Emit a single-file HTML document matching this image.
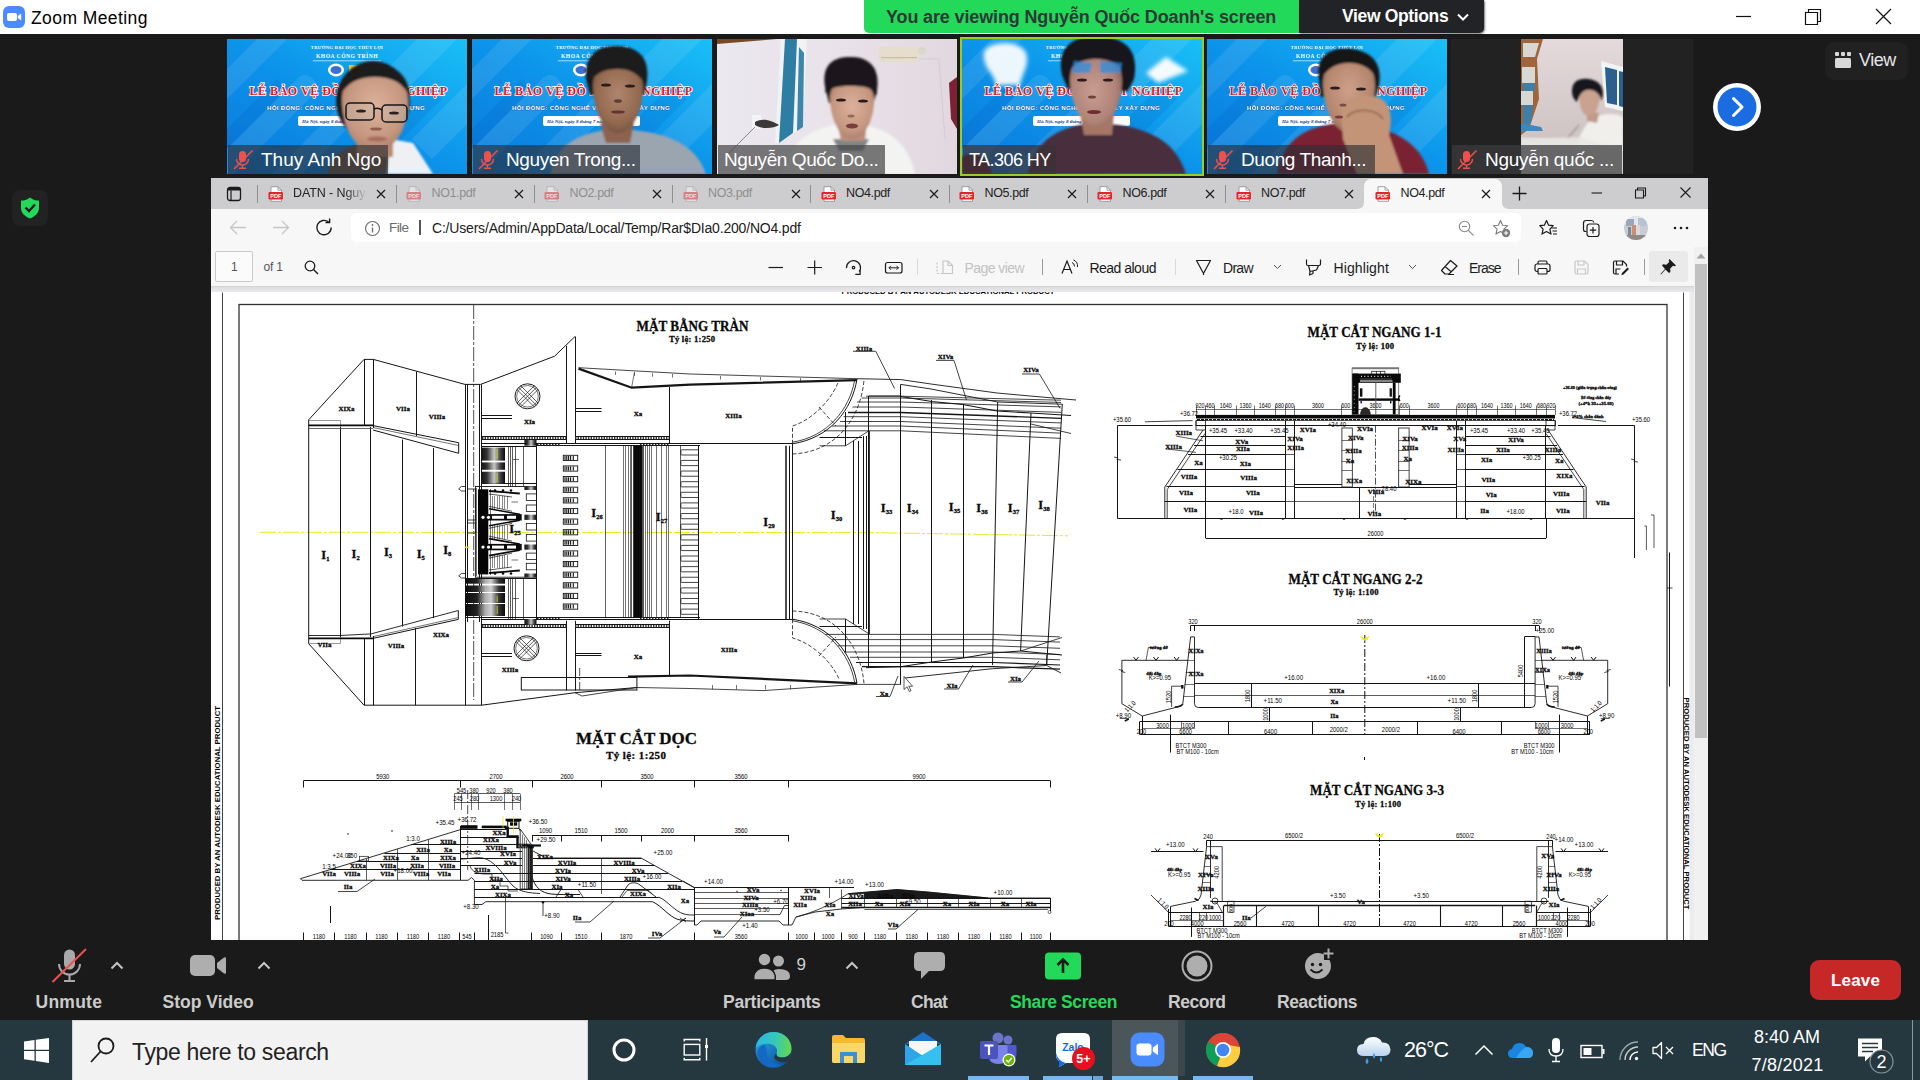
<!DOCTYPE html>
<html lang="vi">
<head>
<meta charset="utf-8">
<title>Zoom Meeting</title>
<style>
html,body{margin:0;padding:0;}
body{width:1920px;height:1080px;overflow:hidden;background:#1a1a1a;font-family:"Liberation Sans","DejaVu Sans",sans-serif;position:relative;}
.abs{position:absolute;}
.t{position:absolute;white-space:nowrap;line-height:1;}
#titlebar{left:0;top:0;width:1920px;height:34px;background:#fff;}
#banner{left:864px;top:0;width:435px;height:33px;background:#23d959;border-radius:0 0 0 5px;}
#viewopt{left:1299px;top:0;width:185px;height:33px;background:#222326;border-radius:0 0 5px 0;box-shadow:1px 1px 2px rgba(0,0,0,.5);}
.tile{position:absolute;top:39px;height:135px;overflow:hidden;}
.lbl{position:absolute;left:0;bottom:0;height:29px;background:rgba(40,44,52,.62);}
.lbl span{position:absolute;top:4px;color:#fff;font-size:19px;white-space:nowrap;line-height:22px;}
.zbtn{position:absolute;color:#cbcbcb;font-size:17.5px;font-weight:bold;white-space:nowrap;line-height:1;}
#taskbar{left:0;top:1020px;width:1920px;height:60px;background:#25383f;}
</style>
</head>
<body>
<!-- ===== Zoom title bar ===== -->
<div id="titlebar" class="abs"></div>
<svg class="abs" style="left:3px;top:6px" width="22" height="22" viewBox="0 0 22 22"><rect x="0" y="0" width="22" height="22" rx="6" fill="#4a8cff"/><rect x="4" y="7" width="10" height="8" rx="2" fill="#fff"/><path d="M14.8 10 L18.2 7.6 V14.4 L14.8 12 Z" fill="#fff"/></svg>
<div class="t" style="left:31px;top:9.500px;font-size:17.5px;color:#000;letter-spacing:.42px">Zoom Meeting</div>
<svg class="abs" style="left:1730px;top:4px" width="170" height="26" viewBox="0 0 170 26"><g stroke="#111" stroke-width="1.2" fill="none"><path d="M6 12.5 H21"/><path d="M75.500 8.500 H87.500 V20.500 H75.500 Z"/><path d="M78.500 8.500 V5.500 H90.500 V17.500 H87.500"/><path d="M146 5 L161 20 M161 5 L146 20"/></g></svg>
<div id="banner" class="abs"></div>
<div class="t" style="left:886px;top:8px;font-size:18px;font-weight:bold;color:#2c3a35;letter-spacing:-0.14px">You are viewing Nguyễn Quốc Doanh's screen</div>
<div id="viewopt" class="abs"></div>
<div class="t" style="left:1342px;top:8px;font-size:17.5px;font-weight:bold;color:#fff;letter-spacing:-0.35px">View Options</div>
<svg class="abs" style="left:1456px;top:12px" width="14" height="10" viewBox="0 0 14 10"><path d="M2 2.500 L7 7.500 L12 2.500" stroke="#fff" stroke-width="2" fill="none"/></svg>

<!-- ===== shield ===== -->
<div class="abs" style="left:12px;top:190px;width:36px;height:36px;border-radius:8px;background:#222"></div>
<svg class="abs" style="left:19px;top:196px" width="22" height="24" viewBox="0 0 22 24"><path d="M11 1.500 C8 4 5 4.500 2 4.500 V12 C2 17 6 20.500 11 22.500 C16 20.500 20 17 20 12 V4.500 C17 4.500 14 4 11 1.500 Z" fill="#23d959"/><path d="M6.500 11.500 L10 15 L16 8.500" stroke="#1d1d1d" stroke-width="2.400" fill="none"/></svg>

<!-- ===== View button / next arrow ===== -->
<div class="abs" style="left:1825px;top:42px;width:83px;height:38px;border-radius:9px;background:#212121"></div>
<svg class="abs" style="left:1834px;top:51px" width="18" height="18" viewBox="0 0 18 18"><g fill="#d8d8d8"><rect x="1" y="1" width="4" height="4" rx="1"/><rect x="7" y="1" width="4" height="4" rx="1"/><rect x="13" y="1" width="4" height="4" rx="1"/><rect x="1" y="7" width="16" height="10" rx="1.500"/></g></svg>
<div class="t" style="left:1859px;top:51px;font-size:18px;color:#e6e6e6;letter-spacing:-.5px">View</div>
<svg class="abs" style="left:1712px;top:82px" width="50" height="50" viewBox="0 0 50 50"><circle cx="25" cy="25" r="24" fill="#fff"/><circle cx="25" cy="25" r="19.500" fill="#1b6ce0"/><path d="M21.500 16.500 L30 25 L21.500 33.500" stroke="#fff" stroke-width="3" fill="none" stroke-linecap="round" stroke-linejoin="round"/></svg>
<!-- ===== video tiles ===== -->
<svg width="0" height="0" style="position:absolute">
<defs>
<linearGradient id="bgBlue" x1="0" y1="1" x2="1" y2="0"><stop offset="0" stop-color="#0a7ada"/><stop offset=".5" stop-color="#0c93ea"/><stop offset="1" stop-color="#19c0f6"/></linearGradient>
<filter id="b1" x="-20%" y="-20%" width="140%" height="140%"><feGaussianBlur stdDeviation="1"/></filter>
<filter id="b2" x="-20%" y="-20%" width="140%" height="140%"><feGaussianBlur stdDeviation="2.200"/></filter>
<filter id="b05" x="-20%" y="-20%" width="140%" height="140%"><feGaussianBlur stdDeviation="0.500"/></filter>
<g id="blueBack">
<rect width="240" height="135" fill="url(#bgBlue)"/>
<g opacity=".09" fill="#fff"><path d="M-10 120 L70 40 Q78 32 86 40 Q94 48 86 56 L-10 152Z"/><path d="M30 150 L120 60 L150 60 L60 150Z"/><path d="M150 40 L200 -10 L240 -10 L170 60Z"/><path d="M185 100 L250 35 V75 L205 120Z"/><path d="M0 30 L40 -10 H70 L0 60Z"/></g>
<g opacity=".14" fill="#0050b8"><path d="M110 135 L200 45 L215 60 L140 135Z"/><path d="M0 90 L50 40 L60 50 L0 110Z"/></g>
<rect x="86" y="21.500" width="68" height=".7" fill="#fff" opacity=".9"/>
<ellipse cx="109" cy="31" rx="8" ry="6.500" fill="#fff"/><ellipse cx="109" cy="31" rx="5.500" ry="4" fill="#3b6fd0"/>
<rect x="122" y="26" width="12" height="9" fill="#e9c94a"/>
<rect x="71" y="77" width="97" height="10" rx="2" fill="#fff"/>
</g>
<radialGradient id="skinA" cx=".5" cy=".42" r=".62"><stop offset="0" stop-color="#dcb19b"/><stop offset=".7" stop-color="#c59780"/><stop offset="1" stop-color="#a87c66"/></radialGradient>
<radialGradient id="skinB" cx=".5" cy=".42" r=".62"><stop offset="0" stop-color="#b0856e"/><stop offset=".7" stop-color="#93694f"/><stop offset="1" stop-color="#70503e"/></radialGradient>
<radialGradient id="skinC" cx=".45" cy=".5" r=".62"><stop offset="0" stop-color="#c99d92"/><stop offset=".7" stop-color="#b08378"/><stop offset="1" stop-color="#8a6058"/></radialGradient>
<radialGradient id="skinD" cx=".5" cy=".42" r=".62"><stop offset="0" stop-color="#cfa089"/><stop offset=".7" stop-color="#b5876f"/><stop offset="1" stop-color="#916853"/></radialGradient>
<g id="micOff"><rect x="6" y="1" width="7" height="11" rx="3.500" fill="#f0504d"/><path d="M3.500 9 A6 6 0 0 0 15.500 9" stroke="#f0504d" stroke-width="1.400" fill="none"/><path d="M9.500 15 V18 M6 18.300 H13" stroke="#f0504d" stroke-width="1.400"/><path d="M1 19 L19.500 0.500" stroke="#f0504d" stroke-width="1.500"/></g>
</defs>
</svg>

<!-- tile 1 -->
<div class="tile" style="left:227px;width:240px">
<svg width="240" height="135" viewBox="0 0 240 135" style="position:absolute;left:0;top:0">
<use href="#blueBack"/>
<g font-family="'Liberation Serif',serif" font-weight="bold" text-anchor="middle">
<text x="120" y="9.500" font-size="4.600" fill="#fff" letter-spacing=".3">TRƯỜNG ĐẠI HỌC THỦY LỢI</text>
<text x="120" y="18.500" font-size="5.600" fill="#fff" letter-spacing=".5">KHOA CÔNG TRÌNH</text>
<text x="121.500" y="56" font-size="13" textLength="198" lengthAdjust="spacingAndGlyphs" fill="#e6151c" stroke="#fff" stroke-width="1.600" paint-order="stroke" letter-spacing=".6">LỄ BẢO VỆ ĐỒ ÁN TỐT NGHIỆP</text>
</g>
<text x="119" y="70.500" font-family="'Liberation Sans',sans-serif" font-weight="bold" font-size="6.200" fill="#fff" text-anchor="middle" textLength="158" lengthAdjust="spacingAndGlyphs" letter-spacing=".3" stroke="#0a3c8a" stroke-width=".5" paint-order="stroke">HỘI ĐỒNG: CÔNG NGHỆ VÀ QUẢN LÝ XÂY DỰNG</text>
<text x="75" y="84.300" font-family="'Liberation Serif',serif" font-style="italic" font-weight="bold" font-size="5" fill="#123a8c">Hà Nội, ngày 8 tháng 7 năm 2021</text>
<g filter="url(#b1)">
<path d="M100 135 C105 112 125 104 148 104 C172 104 196 112 204 135Z" fill="#6e5a48"/>
<path d="M163 100 L186 104 L206 135 L160 135Z" fill="#eef0f4"/>
<rect x="130" y="92" width="36" height="26" fill="#b98a70"/>
<ellipse cx="146" cy="62" rx="37" ry="40" fill="#1d1a1c"/>
<path d="M115 60 C115 40 128 34 148 34 C168 34 181 42 181 62 C181 90 168 112 148 112 C128 112 115 90 115 60Z" fill="url(#skinA)"/>
<path d="M112 58 C114 36 130 26 150 26 C170 26 182 38 183 58 C176 44 166 38 148 38 C130 38 120 44 112 58Z" fill="#1d1a1c"/>
<ellipse cx="150" cy="100" rx="10" ry="2.500" fill="#a86a60"/>
</g>
<g stroke="#15161a" stroke-width="1.500" fill="rgba(190,205,195,.22)"><rect x="119" y="64" width="28" height="17" rx="4"/><rect x="155" y="66" width="25" height="17" rx="4"/><path d="M147 70 Q151 68 155 71" fill="none"/></g>
<g filter="url(#b05)" fill="#2a2020"><ellipse cx="134" cy="72" rx="5" ry="1.600"/><ellipse cx="167" cy="74" rx="5" ry="1.600"/><ellipse cx="149" cy="90" rx="6" ry="1.600" fill="#8d5e50"/></g>
</svg>
<div class="lbl" style="width:160px;left:1px"><svg style="position:absolute;left:5px;top:5px" width="20" height="20" viewBox="0 0 20 20"><use href="#micOff"/></svg><span style="left:33px">Thuy Anh Ngo</span></div>
</div>
<!-- tile 2 -->
<div class="tile" style="left:472px;width:240px">
<svg width="240" height="135" viewBox="0 0 240 135" style="position:absolute;left:0;top:0">
<use href="#blueBack"/>
<g font-family="'Liberation Serif',serif" font-weight="bold" text-anchor="middle">
<text x="120" y="9.500" font-size="4.600" fill="#fff" letter-spacing=".3">TRƯỜNG ĐẠI HỌC THỦY LỢI</text>
<text x="120" y="18.500" font-size="5.600" fill="#fff" letter-spacing=".5">KHOA CÔNG TRÌNH</text>
<text x="121.500" y="56" font-size="13" textLength="198" lengthAdjust="spacingAndGlyphs" fill="#e6151c" stroke="#fff" stroke-width="1.600" paint-order="stroke" letter-spacing=".6">LỄ BẢO VỆ ĐỒ ÁN TỐT NGHIỆP</text>
</g>
<text x="119" y="70.500" font-family="'Liberation Sans',sans-serif" font-weight="bold" font-size="6.200" fill="#fff" text-anchor="middle" textLength="158" lengthAdjust="spacingAndGlyphs" letter-spacing=".3" stroke="#0a3c8a" stroke-width=".5" paint-order="stroke">HỘI ĐỒNG: CÔNG NGHỆ VÀ QUẢN LÝ XÂY DỰNG</text>
<text x="75" y="84.300" font-family="'Liberation Serif',serif" font-style="italic" font-weight="bold" font-size="5" fill="#123a8c">Hà Nội, ngày 8 tháng 7 năm 2021</text>
<g filter="url(#b1)">
<path d="M78 135 C84 104 110 92 146 90 C186 92 222 100 234 135Z" fill="#9aa5b0"/>
<path d="M128 84 L162 84 L158 104 L134 104Z" fill="#8b6450"/>
<path d="M114 40 C112 14 128 6 146 7 C166 8 178 18 175 42 L172 56 L118 56Z" fill="#1b1a1e"/>
<path d="M121 46 C121 30 132 26 146 26 C160 26 171 32 171 48 C171 72 160 94 146 94 C132 94 121 72 121 46Z" fill="url(#skinB)"/>
<path d="M117 44 C118 24 132 18 148 19 C164 20 174 28 174 46 C166 34 158 30 146 30 C132 30 124 34 117 44Z" fill="#1b1a1e"/>
</g>
<g filter="url(#b05)" fill="#2b1b18"><ellipse cx="134" cy="46" rx="5" ry="1.500"/><ellipse cx="158" cy="47" rx="5" ry="1.500"/><ellipse cx="146" cy="62" rx="4" ry="1.800" fill="#5e3d30"/><ellipse cx="146" cy="73" rx="7" ry="1.600" fill="#5e3532"/></g>
</svg>
<div class="lbl" style="width:167px;left:1px"><svg style="position:absolute;left:5px;top:5px" width="20" height="20" viewBox="0 0 20 20"><use href="#micOff"/></svg><span style="left:33px;letter-spacing:-.37px">Nguyen Trong...</span></div>
</div>

<!-- tile 3 -->
<div class="tile" style="left:717px;width:240px">
<svg width="240" height="135" viewBox="0 0 240 135" style="position:absolute;left:0;top:0">
<defs><linearGradient id="wall3" x1="0" y1="0" x2="1" y2="0"><stop offset="0" stop-color="#ebe8ef"/><stop offset=".5" stop-color="#e9e2ea"/><stop offset="1" stop-color="#e2d7df"/></linearGradient></defs>
<rect width="240" height="135" fill="url(#wall3)"/>
<g filter="url(#b05)">
<path d="M0 0 H60 L0 5Z" fill="#7a4a22"/>
<path d="M64 0 L90 0 L86 88 L62 104 L58 104Z" fill="#f1f2f4"/>
<path d="M68 0 L80 0 L76 94 L62 104Z" fill="#2f7ea4"/>
<path d="M82 8 L87 14 L86 88 L80 92Z" fill="#3a86aa"/>
<rect x="162" y="8" width="40" height="15" rx="2" fill="#e6ddcc"/><rect x="164" y="18" width="36" height="1.200" fill="#c9bda8"/><circle cx="205" cy="12" r="4" fill="#d9d9c8"/>
<path d="M202 20 H222 L228 100" stroke="#d2c6ce" stroke-width=".8" fill="none"/>
<rect x="35" y="76" width="9" height="14" fill="#f4f3f6"/>
<path d="M38 83 C46 78 56 82 62 86 C56 90 44 90 38 86Z" fill="#3b3838"/>
<path d="M38 88 L8 118" stroke="#77727a" stroke-width=".8"/>
<path d="M232 44 L240 38 V90 L234 80Z" fill="#7b2230"/>
</g>
<g filter="url(#b1)">
<path d="M64 135 C70 104 96 86 132 84 C170 86 192 104 198 135Z" fill="#f3f3f1"/>
<path d="M116 100 L152 100 L146 112 L122 112Z" fill="#7f8588"/>
<path d="M120 82 L150 82 L148 102 L124 102Z" fill="#b98e7c"/>
<path d="M108 48 C104 24 118 17 136 18 C154 19 163 30 160 52 L156 66 L112 64Z" fill="#1c191c"/>
<path d="M113 58 C113 46 122 44 134 44 C148 44 157 48 157 60 C157 82 147 100 135 100 C123 100 113 80 113 58Z" fill="url(#skinA)"/>
<path d="M108 54 C110 34 122 30 136 31 C150 32 160 40 160 56 C152 46 146 48 134 47 C122 47 114 48 108 54Z" fill="#1c191c"/>
</g>
<g filter="url(#b05)" fill="#2a1c1c"><ellipse cx="124" cy="61" rx="5" ry="1.600"/><ellipse cx="146" cy="62" rx="5" ry="1.600"/><ellipse cx="134" cy="77" rx="3.500" ry="1.500" fill="#946a5a"/><ellipse cx="135" cy="87" rx="6" ry="2.500" fill="#7a3d3c"/></g>
</svg>
<div class="lbl" style="width:167px;left:1px;background:rgba(70,70,72,.72)"><span style="left:6px;letter-spacing:-.42px">Nguyễn Quốc Do...</span></div>
</div>

<!-- tile 4 (active speaker) -->
<div class="abs" style="left:960px;top:37px;width:244px;height:139px;background:#9acd1e"></div>
<div class="tile" style="left:962px;width:240px">
<svg width="240" height="135" viewBox="0 0 240 135" style="position:absolute;left:0;top:0">
<use href="#blueBack"/>
<g filter="url(#b2)" fill="#fff"><path d="M22 14 C24 2 58 0 64 14 C68 26 60 34 58 46 H34 C32 34 20 28 22 14Z" opacity=".92"/><path d="M204 18 L226 32 L196 44 L184 34Z" opacity=".95"/></g>
<g font-family="'Liberation Serif',serif" font-weight="bold" text-anchor="middle">
<text x="120" y="9.500" font-size="4.600" fill="#fff" letter-spacing=".3">TRƯỜNG ĐẠI HỌC THỦY LỢI</text>
<text x="120" y="18.500" font-size="5.600" fill="#fff" letter-spacing=".5">KHOA CÔNG TRÌNH</text>
<text x="121.500" y="56" font-size="13" textLength="198" lengthAdjust="spacingAndGlyphs" fill="#d81a24" stroke="#fff" stroke-width="1.600" paint-order="stroke" letter-spacing=".6">LỄ BẢO VỆ ĐỒ ÁN TỐT NGHIỆP</text>
</g>
<text x="119" y="70.500" font-family="'Liberation Sans',sans-serif" font-weight="bold" font-size="6.200" fill="#fff" text-anchor="middle" textLength="158" lengthAdjust="spacingAndGlyphs" letter-spacing=".3" stroke="#0a3c8a" stroke-width=".5" paint-order="stroke">HỘI ĐỒNG: CÔNG NGHỆ VÀ QUẢN LÝ XÂY DỰNG</text>
<text x="75" y="84.300" font-family="'Liberation Serif',serif" font-style="italic" font-weight="bold" font-size="5" fill="#123a8c">Hà Nội, ngày 8 tháng 7 năm 2021</text>
<g filter="url(#b1)">
<path d="M0 118 C10 112 24 114 30 135 H0Z" fill="#5a1e22"/>
<path d="M66 135 C72 100 100 86 134 84 C176 86 212 96 224 135Z" fill="#4a2e3c"/>
<path d="M118 74 L152 74 L150 96 L122 96Z" fill="#a67666"/>
<path d="M100 36 C94 8 112 -4 136 -2 C160 -2 178 8 172 40 L166 52 L106 50Z" fill="#17161b"/>
<path d="M108 40 C108 22 120 16 134 16 C150 16 160 22 160 42 C160 66 148 88 134 88 C120 88 108 64 108 40Z" fill="url(#skinC)"/>
<path d="M102 40 C102 14 118 6 136 6 C156 6 168 14 168 42 C160 26 150 20 134 20 C120 20 110 24 102 40Z" fill="#17161b"/>
<path d="M112 22 L130 24 L128 34 L110 34Z M138 22 L160 24 L158 34 L138 34Z" fill="#2f8fe0" opacity=".75"/>
</g>
<g filter="url(#b05)" fill="#2a1c1c"><ellipse cx="120" cy="41" rx="5" ry="1.500"/><ellipse cx="146" cy="41" rx="5" ry="1.500"/><ellipse cx="130" cy="58" rx="4" ry="1.600" fill="#6e4238"/><ellipse cx="132" cy="73" rx="7" ry="2" fill="#6e2f32"/></g>
</svg>
<div class="lbl" style="width:93px;left:1px;background:rgba(58,50,56,.72)"><span style="left:6px;letter-spacing:-.55px;font-size:18px">TA.306 HY</span></div>
</div>

<!-- tile 5 -->
<div class="tile" style="left:1207px;width:240px">
<svg width="240" height="135" viewBox="0 0 240 135" style="position:absolute;left:0;top:0">
<use href="#blueBack"/>
<g font-family="'Liberation Serif',serif" font-weight="bold" text-anchor="middle" filter="url(#b05)">
<text x="120" y="9.500" font-size="4.600" fill="#fff" letter-spacing=".3">TRƯỜNG ĐẠI HỌC THỦY LỢI</text>
<text x="120" y="18.500" font-size="5.600" fill="#fff" letter-spacing=".5">KHOA CÔNG TRÌNH</text>
<text x="121.500" y="56" font-size="13" textLength="198" lengthAdjust="spacingAndGlyphs" fill="#d4242c" stroke="#e8eef8" stroke-width="1.600" paint-order="stroke" letter-spacing=".6">LỄ BẢO VỆ ĐỒ ÁN TỐT NGHIỆP</text>
</g>
<text x="119" y="70.500" font-family="'Liberation Sans',sans-serif" font-weight="bold" font-size="6.200" fill="#fff" text-anchor="middle" textLength="158" lengthAdjust="spacingAndGlyphs" letter-spacing=".3" stroke="#0a3c8a" stroke-width=".5" paint-order="stroke" filter="url(#b05)">HỘI ĐỒNG: CÔNG NGHỆ VÀ QUẢN LÝ XÂY DỰNG</text>
<text x="75" y="84.300" font-family="'Liberation Serif',serif" font-style="italic" font-weight="bold" font-size="5" fill="#123a8c">Hà Nội, ngày 8 tháng 7 năm 2021</text>
<g filter="url(#b1)">
<path d="M70 135 C76 100 100 86 136 84 C176 84 214 100 222 135Z" fill="#7a2030"/>
<path d="M112 40 C108 14 126 8 144 10 C164 12 176 24 172 46 L168 60 L114 58Z" fill="#191619"/>
<path d="M116 44 C116 26 128 20 142 20 C158 20 168 28 168 46 C168 72 156 94 142 94 C128 94 116 70 116 44Z" fill="url(#skinD)"/>
<path d="M112 42 C114 20 128 14 144 15 C160 16 172 24 172 44 C166 30 156 24 142 24 C128 24 120 30 112 42Z" fill="#191619"/>
<path d="M134 74 C130 62 150 54 170 58 C184 62 186 80 182 96 L196 135 H150 L136 100Z" fill="#c39478"/>
<path d="M140 78 C148 68 170 70 176 80" stroke="#8c5e4a" stroke-width="1.500" fill="none"/>
</g>
<g filter="url(#b05)" fill="#2a1c1c"><ellipse cx="128" cy="49" rx="5" ry="1.600"/><ellipse cx="154" cy="50" rx="5" ry="1.600"/><ellipse cx="136" cy="66" rx="3.500" ry="1.600" fill="#7a4e40"/><ellipse cx="132" cy="78" rx="4" ry="1.500" fill="#7a3a3a"/></g>
</svg>
<div class="lbl" style="width:167px;left:1px"><svg style="position:absolute;left:5px;top:5px" width="20" height="20" viewBox="0 0 20 20"><use href="#micOff"/></svg><span style="left:33px;letter-spacing:-.4px">Duong Thanh...</span></div>
</div>

<!-- tile 6 -->
<div class="tile" style="left:1451px;width:242px;background:#222">
<svg width="102" height="135" viewBox="0 0 102 135" style="position:absolute;left:70px;top:0">
<defs><linearGradient id="wall6" x1="0" y1="0" x2="0" y2="1"><stop offset="0" stop-color="#e4dadb"/><stop offset="1" stop-color="#c8bcbc"/></linearGradient></defs>
<rect width="102" height="135" fill="url(#wall6)"/>
<g filter="url(#b05)">
<path d="M0 0 H22 L16 20 L18 60 L8 90 L0 96Z" fill="#a0653a"/>
<path d="M2 4 H18 L14 18 H2Z M1 28 H14 V44 H1Z M0 52 H12 V66 H0Z" fill="#d8d8d2"/>
<path d="M2 44 H14 V52 H2Z M2 66 H12 L10 84 H2Z" fill="#3d7fa8"/>
<path d="M0 84 L20 88 L22 92 L0 92Z" fill="#3f86b6"/>
<path d="M80 22 L102 28 V72 L84 68Z" fill="#f1f3f4"/>
<path d="M84 28 L96 31 V66 L86 64Z" fill="#2a5f8e"/><path d="M98 32 L102 33 V68 L98 67Z" fill="#2a5f8e"/>
<path d="M0 98 L40 100 L70 104 L102 108 V135 H0Z" fill="#d9d6d4"/>
<path d="M0 112 H102 V135 H0Z" fill="#a9a4a2"/>
</g>
<g filter="url(#b1)">
<path d="M50 135 C52 108 62 84 74 78 C84 74 96 74 102 78 V135Z" fill="#f0efec"/>
<path d="M66 72 L78 74 L76 84 L66 82Z" fill="#c29a86"/>
<path d="M58 56 C58 48 64 46 71 47 C78 48 80 56 78 64 C76 74 70 78 65 76 C60 74 58 64 58 56Z" fill="#c9a290"/>
<path d="M51 52 C51 40 62 38 72 41 C82 44 84 54 80 62 C79 54 73 50 66 51 C60 52 58 58 56 63 C53 60 51 58 51 52Z" fill="#17161a"/>
<path d="M46 100 L58 86" stroke="#555" stroke-width=".8"/>
<path d="M0 100 L60 98 L102 112 V135 H0Z" fill="#e9e7e4" opacity=".85"/>
</g>
</svg>
<div class="lbl" style="width:170px;left:1px;background:rgba(60,60,62,.74)"><svg style="position:absolute;left:5px;top:5px" width="20" height="20" viewBox="0 0 20 20"><use href="#micOff"/></svg><span style="left:33px;letter-spacing:-.28px">Nguyễn quốc ...</span></div>
</div>
<!-- ===== Edge browser window ===== -->
<div class="abs" style="left:211px;top:178px;width:1497px;height:762px;background:#fff;overflow:hidden"></div>
<div class="abs" style="left:211px;top:178px;width:1497px;height:31px;background:#cdcdcf"></div>
<div class="abs" style="left:211px;top:209px;width:1497px;height:78px;background:#f7f7f7"></div>
<div class="abs" style="left:211px;top:286px;width:1483px;height:1px;background:#d4d4d4"></div>
<div class="abs" style="left:211px;top:287px;width:1483px;height:5px;background:linear-gradient(#dedee0,#e9e9eb)"></div>
<svg class="abs" style="left:226px;top:186px" width="16" height="16" viewBox="0 0 16 16"><rect x="1.5" y="1.5" width="13" height="13" rx="2.5" fill="none" stroke="#1b1b1b" stroke-width="1.3"/><path d="M1.5 4.5 H14.5 V3.5 Q14.5 1.5 12 1.5 H4 Q1.5 1.5 1.5 3.500Z" fill="#1b1b1b"/><path d="M5 4.500 V14.500" stroke="#1b1b1b" stroke-width="1.200"/></svg>
<div class="abs" style="left:257.0px;top:185px;width:1px;height:18px;background:#8f8f8f"></div>
<svg class="abs" style="left:267.5px;top:186px;opacity:1" width="16" height="16" viewBox="0 0 16 16"><path d="M3 .7 H10 L13.500 4.200 V15.300 H3Z" fill="#fff" stroke="#8a8a8a" stroke-width=".8"/><path d="M10 .7 V4.200 H13.500" fill="none" stroke="#8a8a8a" stroke-width=".8"/><rect x=".5" y="6" width="14.500" height="7.500" rx="1.200" fill="#e5252a"/><text x="7.800" y="12" font-family="Liberation Sans,sans-serif" font-weight="bold" font-size="5.600" fill="#fff" text-anchor="middle">PDF</text></svg>
<div class="t" style="left:293.0px;top:187px;font-size:12.5px;color:#222;width:74px;overflow:hidden;-webkit-mask-image:linear-gradient(90deg,#000 70%,transparent 100%);mask-image:linear-gradient(90deg,#000 70%,transparent 100%);letter-spacing:-.1px">DATN - Nguye</div>
<svg class="abs" style="left:375.5px;top:189px" width="10" height="10" viewBox="0 0 10 10"><path d="M1 1 L9 9 M9 1 L1 9" stroke="#1b1b1b" stroke-width="1.200" fill="none"/></svg>
<div class="abs" style="left:395.5px;top:185px;width:1px;height:18px;background:#8f8f8f"></div>
<svg class="abs" style="left:406px;top:186px;opacity:0.45" width="16" height="16" viewBox="0 0 16 16"><path d="M3 .7 H10 L13.500 4.200 V15.300 H3Z" fill="#fff" stroke="#8a8a8a" stroke-width=".8"/><path d="M10 .7 V4.200 H13.500" fill="none" stroke="#8a8a8a" stroke-width=".8"/><rect x=".5" y="6" width="14.500" height="7.500" rx="1.200" fill="#e5252a"/><text x="7.800" y="12" font-family="Liberation Sans,sans-serif" font-weight="bold" font-size="5.600" fill="#fff" text-anchor="middle">PDF</text></svg>
<div class="t" style="left:431.5px;top:187px;font-size:12.5px;color:#8d8d8d;letter-spacing:-.37px">NO1.pdf</div>
<svg class="abs" style="left:514px;top:189px" width="10" height="10" viewBox="0 0 10 10"><path d="M1 1 L9 9 M9 1 L1 9" stroke="#1b1b1b" stroke-width="1.200" fill="none"/></svg>
<div class="abs" style="left:533.5px;top:185px;width:1px;height:18px;background:#8f8f8f"></div>
<svg class="abs" style="left:544px;top:186px;opacity:0.45" width="16" height="16" viewBox="0 0 16 16"><path d="M3 .7 H10 L13.500 4.200 V15.300 H3Z" fill="#fff" stroke="#8a8a8a" stroke-width=".8"/><path d="M10 .7 V4.200 H13.500" fill="none" stroke="#8a8a8a" stroke-width=".8"/><rect x=".5" y="6" width="14.500" height="7.500" rx="1.200" fill="#e5252a"/><text x="7.800" y="12" font-family="Liberation Sans,sans-serif" font-weight="bold" font-size="5.600" fill="#fff" text-anchor="middle">PDF</text></svg>
<div class="t" style="left:569.5px;top:187px;font-size:12.5px;color:#8d8d8d;letter-spacing:-.37px">NO2.pdf</div>
<svg class="abs" style="left:652px;top:189px" width="10" height="10" viewBox="0 0 10 10"><path d="M1 1 L9 9 M9 1 L1 9" stroke="#1b1b1b" stroke-width="1.200" fill="none"/></svg>
<div class="abs" style="left:672.0px;top:185px;width:1px;height:18px;background:#8f8f8f"></div>
<svg class="abs" style="left:682.5px;top:186px;opacity:0.45" width="16" height="16" viewBox="0 0 16 16"><path d="M3 .7 H10 L13.500 4.200 V15.300 H3Z" fill="#fff" stroke="#8a8a8a" stroke-width=".8"/><path d="M10 .7 V4.200 H13.500" fill="none" stroke="#8a8a8a" stroke-width=".8"/><rect x=".5" y="6" width="14.500" height="7.500" rx="1.200" fill="#e5252a"/><text x="7.800" y="12" font-family="Liberation Sans,sans-serif" font-weight="bold" font-size="5.600" fill="#fff" text-anchor="middle">PDF</text></svg>
<div class="t" style="left:708.0px;top:187px;font-size:12.5px;color:#8d8d8d;letter-spacing:-.37px">NO3.pdf</div>
<svg class="abs" style="left:790.5px;top:189px" width="10" height="10" viewBox="0 0 10 10"><path d="M1 1 L9 9 M9 1 L1 9" stroke="#1b1b1b" stroke-width="1.200" fill="none"/></svg>
<div class="abs" style="left:810.0px;top:185px;width:1px;height:18px;background:#8f8f8f"></div>
<svg class="abs" style="left:820.5px;top:186px;opacity:1" width="16" height="16" viewBox="0 0 16 16"><path d="M3 .7 H10 L13.500 4.200 V15.300 H3Z" fill="#fff" stroke="#8a8a8a" stroke-width=".8"/><path d="M10 .7 V4.200 H13.500" fill="none" stroke="#8a8a8a" stroke-width=".8"/><rect x=".5" y="6" width="14.500" height="7.500" rx="1.200" fill="#e5252a"/><text x="7.800" y="12" font-family="Liberation Sans,sans-serif" font-weight="bold" font-size="5.600" fill="#fff" text-anchor="middle">PDF</text></svg>
<div class="t" style="left:846.0px;top:187px;font-size:12.5px;color:#222;letter-spacing:-.37px">NO4.pdf</div>
<svg class="abs" style="left:928.5px;top:189px" width="10" height="10" viewBox="0 0 10 10"><path d="M1 1 L9 9 M9 1 L1 9" stroke="#1b1b1b" stroke-width="1.200" fill="none"/></svg>
<div class="abs" style="left:948.5px;top:185px;width:1px;height:18px;background:#8f8f8f"></div>
<svg class="abs" style="left:959px;top:186px;opacity:1" width="16" height="16" viewBox="0 0 16 16"><path d="M3 .7 H10 L13.500 4.200 V15.300 H3Z" fill="#fff" stroke="#8a8a8a" stroke-width=".8"/><path d="M10 .7 V4.200 H13.500" fill="none" stroke="#8a8a8a" stroke-width=".8"/><rect x=".5" y="6" width="14.500" height="7.500" rx="1.200" fill="#e5252a"/><text x="7.800" y="12" font-family="Liberation Sans,sans-serif" font-weight="bold" font-size="5.600" fill="#fff" text-anchor="middle">PDF</text></svg>
<div class="t" style="left:984.5px;top:187px;font-size:12.5px;color:#222;letter-spacing:-.37px">NO5.pdf</div>
<svg class="abs" style="left:1067px;top:189px" width="10" height="10" viewBox="0 0 10 10"><path d="M1 1 L9 9 M9 1 L1 9" stroke="#1b1b1b" stroke-width="1.200" fill="none"/></svg>
<div class="abs" style="left:1086.5px;top:185px;width:1px;height:18px;background:#8f8f8f"></div>
<svg class="abs" style="left:1097px;top:186px;opacity:1" width="16" height="16" viewBox="0 0 16 16"><path d="M3 .7 H10 L13.500 4.200 V15.300 H3Z" fill="#fff" stroke="#8a8a8a" stroke-width=".8"/><path d="M10 .7 V4.200 H13.500" fill="none" stroke="#8a8a8a" stroke-width=".8"/><rect x=".5" y="6" width="14.500" height="7.500" rx="1.200" fill="#e5252a"/><text x="7.800" y="12" font-family="Liberation Sans,sans-serif" font-weight="bold" font-size="5.600" fill="#fff" text-anchor="middle">PDF</text></svg>
<div class="t" style="left:1122.5px;top:187px;font-size:12.5px;color:#222;letter-spacing:-.37px">NO6.pdf</div>
<svg class="abs" style="left:1205px;top:189px" width="10" height="10" viewBox="0 0 10 10"><path d="M1 1 L9 9 M9 1 L1 9" stroke="#1b1b1b" stroke-width="1.200" fill="none"/></svg>
<div class="abs" style="left:1225.0px;top:185px;width:1px;height:18px;background:#8f8f8f"></div>
<svg class="abs" style="left:1235.5px;top:186px;opacity:1" width="16" height="16" viewBox="0 0 16 16"><path d="M3 .7 H10 L13.500 4.200 V15.300 H3Z" fill="#fff" stroke="#8a8a8a" stroke-width=".8"/><path d="M10 .7 V4.200 H13.500" fill="none" stroke="#8a8a8a" stroke-width=".8"/><rect x=".5" y="6" width="14.500" height="7.500" rx="1.200" fill="#e5252a"/><text x="7.800" y="12" font-family="Liberation Sans,sans-serif" font-weight="bold" font-size="5.600" fill="#fff" text-anchor="middle">PDF</text></svg>
<div class="t" style="left:1261.0px;top:187px;font-size:12.5px;color:#222;letter-spacing:-.37px">NO7.pdf</div>
<svg class="abs" style="left:1343.5px;top:189px" width="10" height="10" viewBox="0 0 10 10"><path d="M1 1 L9 9 M9 1 L1 9" stroke="#1b1b1b" stroke-width="1.200" fill="none"/></svg>
<div class="abs" style="left:1364px;top:179px;width:138px;height:30px;background:#f7f7f7;border-radius:7px 7px 0 0"></div>
<svg class="abs" style="left:1357px;top:202px" width="7" height="7" viewBox="0 0 7 7"><path d="M7 0 V7 H0 Q7 7 7 0Z" fill="#f7f7f7"/></svg>
<svg class="abs" style="left:1502px;top:202px" width="7" height="7" viewBox="0 0 7 7"><path d="M0 0 V7 H7 Q0 7 0 0Z" fill="#f7f7f7"/></svg>
<svg class="abs" style="left:1375px;top:186px;opacity:1" width="16" height="16" viewBox="0 0 16 16"><path d="M3 .7 H10 L13.500 4.200 V15.300 H3Z" fill="#fff" stroke="#8a8a8a" stroke-width=".8"/><path d="M10 .7 V4.200 H13.500" fill="none" stroke="#8a8a8a" stroke-width=".8"/><rect x=".5" y="6" width="14.500" height="7.500" rx="1.200" fill="#e5252a"/><text x="7.800" y="12" font-family="Liberation Sans,sans-serif" font-weight="bold" font-size="5.600" fill="#fff" text-anchor="middle">PDF</text></svg>
<div class="t" style="left:1400.5px;top:187px;font-size:12.5px;color:#222;letter-spacing:-.37px">NO4.pdf</div>
<svg class="abs" style="left:1481px;top:189px" width="10" height="10" viewBox="0 0 10 10"><path d="M1 1 L9 9 M9 1 L1 9" stroke="#1b1b1b" stroke-width="1.200" fill="none"/></svg>
<svg class="abs" style="left:1512px;top:186px" width="15" height="15" viewBox="0 0 15 15"><path d="M7.500 .5 V14.500 M.5 7.500 H14.500" stroke="#1b1b1b" stroke-width="1.300"/></svg>
<svg class="abs" style="left:1586px;top:184px" width="110" height="18" viewBox="0 0 110 18"><g stroke="#1b1b1b" stroke-width="1.100" fill="none"><path d="M5.500 9 H16"/><path d="M49.500 6 H57.500 V14 H49.500Z"/><path d="M51.500 6 V4 H59.500 V12 H57.500"/><path d="M94.500 3.500 L104.500 13.500 M104.500 3.500 L94.500 13.500"/></g></svg>
<!-- address bar -->
<svg class="abs" style="left:229px;top:219px" width="18" height="17" viewBox="0 0 18 17"><path d="M17 8.500 H1.500 M8 2 L1.500 8.500 L8 15" stroke="#c6c6c6" stroke-width="1.300" fill="none"/></svg>
<svg class="abs" style="left:272px;top:219px" width="18" height="17" viewBox="0 0 18 17"><path d="M1 8.500 H16.500 M10 2 L16.500 8.500 L10 15" stroke="#c6c6c6" stroke-width="1.300" fill="none"/></svg>
<svg class="abs" style="left:315px;top:218px" width="19" height="19" viewBox="0 0 19 19"><path d="M16.200 9.500 A7.200 7.200 0 1 1 13.700 4.100" stroke="#1b1b1b" stroke-width="1.400" fill="none"/><path d="M10.500 4.600 H14.600 V0.600" stroke="#1b1b1b" stroke-width="1.400" fill="none"/></svg>
<div class="abs" style="left:351px;top:213px;width:1170px;height:29px;background:#fff;border-radius:5px"></div>
<svg class="abs" style="left:364px;top:220px" width="17" height="17" viewBox="0 0 17 17"><circle cx="8.500" cy="8.500" r="7" stroke="#6a6a6a" stroke-width="1.100" fill="none"/><path d="M8.500 7.500 V12.500" stroke="#6a6a6a" stroke-width="1.300"/><circle cx="8.500" cy="5" r=".9" fill="#6a6a6a"/></svg>
<div class="t" style="left:389px;top:221px;font-size:13.5px;color:#6a6a6a;letter-spacing:-.6px">File</div>
<div class="abs" style="left:419px;top:220px;width:1.500px;height:15px;background:#555"></div>
<div class="t" style="left:432px;top:220.500px;font-size:14px;color:#202020;letter-spacing:-.19px">C:/Users/Admin/AppData/Local/Temp/Rar$DIa0.200/NO4.pdf</div>
<svg class="abs" style="left:1458px;top:220px" width="17" height="17" viewBox="0 0 17 17"><circle cx="6.500" cy="6.500" r="5.200" stroke="#8a8a8a" stroke-width="1.100" fill="none"/><path d="M10.300 10.300 L15.500 15.500 M4 6.500 H9" stroke="#8a8a8a" stroke-width="1.100"/></svg>
<svg class="abs" style="left:1492px;top:219px" width="20" height="20" viewBox="0 0 20 20"><path d="M8.500 1.500 L10.600 6.200 L15.700 6.700 L11.900 10.100 L13 15.100 L8.500 12.500 L4 15.100 L5.100 10.100 L1.300 6.700 L6.400 6.200Z" stroke="#7a7a7a" stroke-width="1.100" fill="none" stroke-linejoin="round"/><circle cx="14" cy="14" r="4.200" fill="#7a7a7a"/><path d="M14 11.800 V16.200 M11.800 14 H16.200" stroke="#fff" stroke-width="1.100"/></svg>
<svg class="abs" style="left:1539px;top:219px" width="20" height="19" viewBox="0 0 20 19"><path d="M7.500 1.500 L9.600 6.200 L14.200 6.700 L10.900 10.100 L12 15.100 L7.500 12.500 L3 15.100 L4.100 10.100 L0.800 6.700 L5.400 6.200Z" stroke="#1b1b1b" stroke-width="1.200" fill="none" stroke-linejoin="round"/><path d="M12.500 9 H18 M13.500 12 H18 M14 15 H18" stroke="#1b1b1b" stroke-width="1.200"/></svg>
<svg class="abs" style="left:1582px;top:219px" width="19" height="19" viewBox="0 0 19 19"><path d="M4.500 12.500 H3.500 Q1.500 12.500 1.500 10.500 V4 Q1.500 1.500 4 1.500 H9.500 Q11.500 1.500 11.800 3.500" stroke="#1b1b1b" stroke-width="1.200" fill="none"/><rect x="5" y="5" width="12" height="12.500" rx="2.500" stroke="#1b1b1b" stroke-width="1.200" fill="none"/><path d="M11 8 V14.500 M7.800 11.200 H14.200" stroke="#1b1b1b" stroke-width="1.200"/></svg>
<svg class="abs" style="left:1624px;top:216px" width="24" height="24" viewBox="0 0 24 24"><defs><clipPath id="avc"><circle cx="12" cy="12" r="12"/></clipPath></defs><g clip-path="url(#avc)"><rect width="24" height="24" fill="#c9ccd2"/><rect x="0" y="0" width="24" height="9" fill="#e4e8ee"/><rect x="2" y="3" width="8" height="7" fill="#9aa7b8"/><rect x="14" y="2" width="9" height="8" fill="#b9c3cf"/><rect x="8" y="9" width="4" height="12" fill="#c98f74"/><rect x="12" y="9" width="4" height="12" fill="#d9d9e0"/><rect x="4" y="11" width="3" height="9" fill="#7f8894"/><rect x="0" y="19" width="24" height="5" fill="#8f8a86"/></g></svg>
<svg class="abs" style="left:1673px;top:225px" width="16" height="6" viewBox="0 0 16 6"><circle cx="2" cy="3" r="1.300" fill="#1b1b1b"/><circle cx="8" cy="3" r="1.300" fill="#1b1b1b"/><circle cx="14" cy="3" r="1.300" fill="#1b1b1b"/></svg>

<!-- pdf toolbar -->
<div class="abs" style="left:215px;top:251px;width:38px;height:31px;box-sizing:border-box;border:1px solid #c9c9c9;border-radius:2px;background:#fbfbfb"></div>
<div class="t" style="left:231px;top:261px;font-size:12px;color:#555">1</div>
<div class="t" style="left:263.500px;top:261px;font-size:12px;color:#555;letter-spacing:-.2px">of 1</div>
<svg class="abs" style="left:304px;top:260px" width="15" height="15" viewBox="0 0 15 15"><circle cx="6" cy="6" r="4.800" stroke="#1b1b1b" stroke-width="1.300" fill="none"/><path d="M9.500 9.500 L14 14" stroke="#1b1b1b" stroke-width="1.400"/></svg>
<svg class="abs" style="left:768px;top:259px" width="140" height="18" viewBox="0 0 140 18"><g stroke="#1b1b1b" stroke-width="1.200" fill="none"><path d="M.5 8.500 H15"/><path d="M39.500 8.500 H54 M46.700 1.500 V15.500"/><path d="M78.500 9.100 A7 7 0 1 1 91.200 12.600"/><path d="M87.300 15.300 H92.100 V10.500"/><circle cx="85.500" cy="8.600" r="1.300"/><rect x="117.500" y="3.500" width="16.500" height="10.500" rx="2"/><path d="M121 8.800 H130.500 M123 6.800 L121 8.800 L123 10.800 M128.500 6.800 L130.500 8.800 L128.500 10.800" stroke-width="1"/></g></svg>
<div class="abs" style="left:916.500px;top:259px;width:1px;height:16px;background:#d9d9d9"></div>
<svg class="abs" style="left:936px;top:260px" width="18" height="15" viewBox="0 0 18 15"><g stroke="#c4c4c4" stroke-width="1.100" fill="none"><path d="M1 2.500 V12.500 Q1 13.500 2 13.500 H7" stroke-dasharray="2 1.500"/><path d="M7 1 H12 L16.500 5.500 V13.500 H7Z"/><path d="M12 1 V5.500 H16.500"/></g></svg>
<div class="t" style="left:964.500px;top:260.500px;font-size:14px;color:#c2c2c2;letter-spacing:-.55px">Page view</div>
<div class="abs" style="left:1041.500px;top:259px;width:1px;height:16px;background:#9a9a9a"></div>
<svg class="abs" style="left:1061px;top:259px" width="19" height="16" viewBox="0 0 19 16"><g stroke="#1b1b1b" stroke-width="1.200" fill="none"><path d="M1 14.500 L6 2 L11 14.500 M2.800 10.500 H9.200"/><path d="M11 3.500 Q13.500 4.500 13.500 7.500" stroke-width="1"/><path d="M12.500 .8 Q17 3 16.500 8" stroke-width="1"/></g></svg>
<div class="t" style="left:1089.500px;top:260.500px;font-size:14px;color:#1b1b1b;letter-spacing:-.52px">Read aloud</div>
<div class="abs" style="left:1175px;top:259px;width:1px;height:16px;background:#d9d9d9"></div>
<svg class="abs" style="left:1195px;top:259px" width="17" height="17" viewBox="0 0 17 17"><path d="M1.500 1.500 H15.500 L9 13.500 H8Z M8.500 13.500 V16" stroke="#1b1b1b" stroke-width="1.200" fill="none" stroke-linejoin="round"/></svg>
<div class="t" style="left:1223px;top:260.500px;font-size:14px;color:#1b1b1b;letter-spacing:-.7px">Draw</div>
<svg class="abs" style="left:1273px;top:264px" width="9" height="6" viewBox="0 0 9 6"><path d="M1 1 L4.500 4.500 L8 1" stroke="#555" stroke-width="1" fill="none"/></svg>
<svg class="abs" style="left:1305px;top:259px" width="17" height="17" viewBox="0 0 17 17"><path d="M1.500 .5 V5 Q1.500 6.500 3 6.500 H14 Q15.500 6.500 15.500 5 V.5 M3.500 6.500 L5 12.500 L11.500 11 L13.500 6.500 M5 12.500 L4.500 16 L8 14.500 L8 12" stroke="#1b1b1b" stroke-width="1.200" fill="none" stroke-linejoin="round"/></svg>
<div class="t" style="left:1333.500px;top:260.500px;font-size:14px;color:#1b1b1b;letter-spacing:.1px">Highlight</div>
<svg class="abs" style="left:1408px;top:264px" width="9" height="6" viewBox="0 0 9 6"><path d="M1 1 L4.500 4.500 L8 1" stroke="#555" stroke-width="1" fill="none"/></svg>
<svg class="abs" style="left:1440px;top:259px" width="19" height="17" viewBox="0 0 19 17"><path d="M10.500 1.500 L17 7 L9 15 H5 L1.500 11.500Z M5 7.500 L11.500 13 M8 15.500 H14" stroke="#1b1b1b" stroke-width="1.200" fill="none" stroke-linejoin="round"/></svg>
<div class="t" style="left:1469px;top:260.500px;font-size:14px;color:#1b1b1b;letter-spacing:-1px">Erase</div>
<div class="abs" style="left:1517.500px;top:259px;width:1px;height:16px;background:#9a9a9a"></div>
<svg class="abs" style="left:1534px;top:260px" width="17" height="15" viewBox="0 0 17 15"><g stroke="#1b1b1b" stroke-width="1.200" fill="none"><path d="M4 4 V2.500 Q4 1 5.500 1 H11.500 Q13 1 13 2.500 V4"/><rect x="1" y="4" width="15" height="7.500" rx="2"/><rect x="4" y="8.500" width="9" height="5.500" rx="1" fill="#f7f7f7"/></g></svg>
<svg class="abs" style="left:1574px;top:260px" width="15" height="15" viewBox="0 0 15 15"><g stroke="#c8c8c8" stroke-width="1.200" fill="none"><path d="M1 2.500 Q1 1 2.500 1 H10.500 L14 4.500 V12.500 Q14 14 12.500 14 H2.500 Q1 14 1 12.500Z"/><path d="M4 1 V5 H10 V1 M3.500 14 V9 H11.500 V14"/></g></svg>
<svg class="abs" style="left:1612px;top:259px" width="18" height="17" viewBox="0 0 18 17"><g stroke="#1b1b1b" stroke-width="1.200" fill="none"><path d="M7 15 H3 Q1.500 15 1.500 13.500 V3.500 Q1.500 2 3 2 H11 L14.500 5.500 V7.500"/><path d="M4.500 2 V6 H10.500 V2 M4 15 V10 H8.500"/></g><path d="M15.500 8.500 L17 10 L11.500 15.500 L9.300 16.200 L10 14Z" fill="#1b1b1b"/></svg>
<div class="abs" style="left:1643.500px;top:259px;width:1px;height:16px;background:#9a9a9a"></div>
<div class="abs" style="left:1649px;top:251px;width:39px;height:31px;background:#eaeaea;border-radius:3px"></div>
<svg class="abs" style="left:1659px;top:258px" width="18" height="18" viewBox="0 0 18 18"><path d="M10.500 1 L17 7.500 L15.800 8.300 L14 7.800 L11.200 10.600 L11.400 14 L10 15 L6.500 11.500 L2 16.500 L1.500 16 L6 11 L3 7.500 L4 6.300 L7.400 6.800 L10.200 4 L9.700 2.200Z" fill="#1b1b1b"/></svg>
<!-- scrollbar -->
<div class="abs" style="left:1694px;top:247px;width:14px;height:693px;background:#f1f1f1"></div>
<svg class="abs" style="left:1696px;top:253px" width="10" height="6" viewBox="0 0 10 6"><path d="M5 .5 L9.500 5.500 H.5Z" fill="#a3a3a3"/></svg>
<div class="abs" style="left:1694.500px;top:264px;width:12px;height:474px;background:#c1c1c1"></div>
<!-- ===== PDF page: CAD drawing ===== -->
<svg class="abs" style="left:211px;top:292px" width="1483" height="648" viewBox="211 292 1483 648" fill="none">
<defs>
<clipPath id="clipTop"><rect x="211" y="292" width="1483" height="2.300"/></clipPath>
<linearGradient id="cyl" x1="0" y1="0" x2="1" y2="0"><stop offset="0" stop-color="#111"/><stop offset=".25" stop-color="#333"/><stop offset=".55" stop-color="#c8c8c8"/><stop offset=".8" stop-color="#444"/><stop offset="1" stop-color="#0a0a0a"/></linearGradient>
<linearGradient id="cyl2" x1="0" y1="0" x2="1" y2="0"><stop offset="0" stop-color="#0a0a0a"/><stop offset=".3" stop-color="#222"/><stop offset=".5" stop-color="#aaa"/><stop offset=".65" stop-color="#d0d0d0"/><stop offset=".85" stop-color="#333"/><stop offset="1" stop-color="#0a0a0a"/></linearGradient>
<linearGradient id="cylv" x1="0" y1="0" x2="1" y2="0"><stop offset="0" stop-color="#999"/><stop offset=".5" stop-color="#333"/><stop offset="1" stop-color="#111"/></linearGradient>
<style>.s{font-family:"Liberation Serif","DejaVu Serif",serif;font-weight:bold;fill:#0a0a0a;stroke:#0a0a0a;stroke-width:.3px}.p{font-family:"Liberation Sans","DejaVu Sans",sans-serif;fill:#050505;stroke:none}.n{font-family:"Liberation Sans","DejaVu Sans",sans-serif;fill:#050505;stroke:none;transform-box:fill-box;transform-origin:50% 50%;transform:scaleX(.86)}</style>
</defs>
<rect x="211" y="292" width="1478.500" height="648" fill="#fff"/>
<rect x="1689.500" y="292" width="4.500" height="648" fill="#ececec"/>
<rect x="239" y="304.5" width="1428" height="700" stroke="#333" stroke-width="1.3" fill="none" />
<path d="M222.5 292.5L222.5 940" stroke="#444" stroke-width="1" />
<path d="M1683.5 292.5L1683.5 940" stroke="#444" stroke-width="1" />
<text x="948" y="294.200" font-size="6.500" text-anchor="middle" class="p" font-weight="bold" clip-path="url(#clipTop)" textLength="213" lengthAdjust="spacingAndGlyphs">PRODUCED BY AN AUTODESK EDUCATIONAL PRODUCT</text>
<text transform="translate(219.500 813) rotate(-90)" font-size="6.400" text-anchor="middle" class="p" font-weight="bold" textLength="214" lengthAdjust="spacingAndGlyphs">PRODUCED BY AN AUTODESK EDUCATIONAL PRODUCT</text>
<text transform="translate(1684.300 803.500) rotate(90)" font-size="6.400" text-anchor="middle" class="p" font-weight="bold" textLength="212" lengthAdjust="spacingAndGlyphs">PRODUCED BY AN AUTODESK EDUCATIONAL PRODUCT</text>
<text x="692.5" y="330.8" font-size="14.6" text-anchor="middle" class="s" textLength="112" lengthAdjust="spacingAndGlyphs">MẶT BẰNG TRÀN</text>
<text x="692" y="342.3" font-size="8.6" text-anchor="middle" class="s" textLength="46">Tỷ lệ: 1:250</text>
<path d="M473.7 305L473.7 700" stroke="#222" stroke-width="0.8" stroke-dasharray="14 2 3 2"/>
<path d="M260 532.3L870 532.6L1068 535.8" stroke="#e8e800" stroke-width="0.9" fill="none" stroke-dasharray="16 2 3 2"/>
<path d="M308.7 419.8L364 359.4L373.3 359.4L465 384.4L480.6 384.4L554.6 356.2L575 336.5" stroke="#151515" stroke-width="1" fill="none" />
<path d="M308.7 419.8L308.7 643.7L364 705.2L465 705.2L481.7 705.2L575 692.7L637 687.5" stroke="#151515" stroke-width="1" fill="none" />
<path d="M340.5 427L340.5 637" stroke="#151515" stroke-width="1" />
<path d="M370.5 427L370.5 637" stroke="#151515" stroke-width="1" />
<path d="M402.5 439.6L402.5 626.5" stroke="#151515" stroke-width="1" />
<path d="M433.5 448L433.5 618" stroke="#151515" stroke-width="1" />
<path d="M340.5 420L340.5 427" stroke="#555" stroke-width="0.6" />
<path d="M308.7 420.5L340 420.5" stroke="#555" stroke-width="0.6" />
<path d="M340.5 637L340.5 643.7" stroke="#555" stroke-width="0.6" />
<path d="M308.7 643.5L340 643.5" stroke="#555" stroke-width="0.6" />
<path d="M364.5 359.4L364.5 426" stroke="#151515" stroke-width="1" />
<path d="M373.5 359.4L373.5 428" stroke="#151515" stroke-width="1" />
<path d="M416.5 371.5L416.5 436" stroke="#151515" stroke-width="1" />
<path d="M364.5 638.5L364.5 705.2" stroke="#151515" stroke-width="1" />
<path d="M373.5 636L373.5 705.2" stroke="#151515" stroke-width="1" />
<path d="M415.5 628L415.5 705.2" stroke="#151515" stroke-width="1" />
<path d="M308.7 425.4L373 425.4" stroke="#0a0a0a" stroke-width="1.7" fill="none" />
<path d="M373 425.6L458.7 442.7" stroke="#151515" stroke-width="1" fill="none" />
<path d="M308.7 428.5L373 428.5" stroke="#444" stroke-width="0.8" fill="none" />
<path d="M373 430L458.7 453.3L458.7 442.7" stroke="#151515" stroke-width="1" fill="none" />
<path d="M373 427.5L458.7 445.5" stroke="#151515" stroke-width="0.6" />
<path d="M308.7 638.3L373.3 638.3" stroke="#0a0a0a" stroke-width="1.7" fill="none" />
<path d="M308.7 635.5L340 635.5L371 633.9L458.3 610.5" stroke="#151515" stroke-width="0.9" fill="none" />
<path d="M373.3 638.3L458.3 619.4L458.3 610.5" stroke="#151515" stroke-width="1" fill="none" />
<path d="M373.3 636.6L457.8 617.7" stroke="#151515" stroke-width="0.6" />
<path d="M465.5 384.4L465.5 705.2" stroke="#151515" stroke-width="1" />
<path d="M467.5 384.4L467.5 622" stroke="#151515" stroke-width="1" />
<path d="M479.5 384.4L479.5 622" stroke="#151515" stroke-width="1" />
<path d="M481.5 384.4L481.5 705.2" stroke="#151515" stroke-width="1" />
<path d="M566.5 346L566.5 443.7" stroke="#151515" stroke-width="1" />
<path d="M575.5 336.5L575.5 443.7" stroke="#151515" stroke-width="1" />
<circle cx="527.500" cy="396.300" r="12.500" fill="none" stroke="#1c1c1c" stroke-width="1"/><circle cx="527.500" cy="396.300" r="10.800" fill="none" stroke="#1c1c1c" stroke-width=".6"/>
<path d="M518.500 387.300L536.500 405.300M536.500 387.300L518.500 405.300M520.500 385.500L538.300 403.300M516.700 389.300L534.500 407.100M534.500 385.500L516.700 403.300M538.300 389.300L520.500 407.100" stroke="#1c1c1c" stroke-width=".7"/>
<circle cx="526.500" cy="648.300" r="12.500" fill="none" stroke="#1c1c1c" stroke-width="1"/><circle cx="526.500" cy="648.300" r="10.800" fill="none" stroke="#1c1c1c" stroke-width=".6"/>
<path d="M517.500 639.300L535.500 657.300M535.500 639.300L517.500 657.300M519.500 637.500L537.300 655.300M515.700 641.300L533.500 659.100M533.500 637.500L515.700 655.300M537.300 641.300L519.500 659.100" stroke="#1c1c1c" stroke-width=".7"/>
<path d="M481.7 415.5L512 415.5" stroke="#151515" stroke-width="1" />
<path d="M481.7 418.5L512 418.5" stroke="#151515" stroke-width="1" />
<path d="M575.4 408.5L601.5 408.5" stroke="#151515" stroke-width="1" />
<path d="M575.4 411.5L601.5 411.5" stroke="#151515" stroke-width="1" />
<path d="M481.7 653.5L512 653.5" stroke="#151515" stroke-width="1" />
<path d="M481.7 656.5L512 656.5" stroke="#151515" stroke-width="1" />
<path d="M575.4 653.5L601.5 653.5" stroke="#151515" stroke-width="1" />
<path d="M575.4 655.5L601.5 655.5" stroke="#151515" stroke-width="1" />
<path d="M578.5 367.7L690 374L857 378.7" stroke="#151515" stroke-width="0.8" fill="none" />
<path d="M578.5 368.6L631.7 387.7L690 384.6L857 380.2" stroke="#151515" stroke-width="2.2" fill="none" />
<path d="M615.5 371.5L615.5 375" stroke="#151515" stroke-width="0.6" />
<path d="M634.5 372.4L634.5 375.9" stroke="#151515" stroke-width="0.6" />
<path d="M652.5 373.2L652.5 376.7" stroke="#151515" stroke-width="0.6" />
<path d="M672.5 374L672.5 377.5" stroke="#151515" stroke-width="0.6" />
<path d="M720.5 376L720.5 379.5" stroke="#151515" stroke-width="0.6" />
<path d="M760.5 377L760.5 380.5" stroke="#151515" stroke-width="0.6" />
<path d="M800.5 378L800.5 381.5" stroke="#151515" stroke-width="0.6" />
<path d="M634.5 372L631.7 387" stroke="#151515" stroke-width="0.6" />
<rect x="521.3" y="677.5" width="115.6" height="12.5" stroke="#151515" stroke-width="1" fill="none" />
<path d="M566.5 620.8L566.5 690.6" stroke="#151515" stroke-width="1" />
<path d="M575.5 620.8L575.5 690.6" stroke="#151515" stroke-width="1" />
<path d="M579.7 668L579.7 692" stroke="#222" stroke-width="0.8" stroke-dasharray="8 2 2 2"/>
<path d="M628 676.6L690 675.5L857 683.3" stroke="#151515" stroke-width="2.2" fill="none" />
<path d="M575 692.7L582 696L637 687.5L690 688.5L763 690.6L857 684.4" stroke="#151515" stroke-width="0.8" fill="none" />
<path d="M712.5 685L712.5 689.5" stroke="#151515" stroke-width="0.6" />
<path d="M736.5 685L736.5 689.5" stroke="#151515" stroke-width="0.6" />
<path d="M765.5 685L765.5 689.5" stroke="#151515" stroke-width="0.6" />
<path d="M790.5 685L790.5 689.5" stroke="#151515" stroke-width="0.6" />
<path d="M481.7 436.5L566 436.5" stroke="#151515" stroke-width="1" />
<path d="M481.7 439.5L566 439.5" stroke="#151515" stroke-width="1" />
<path d="M575 436.5L669 436.5" stroke="#151515" stroke-width="1" />
<path d="M575 439.5L669 439.5" stroke="#151515" stroke-width="1" />
<path d="M482 438.05L566 438.05" stroke="#333" stroke-width="2.2" stroke-dasharray="1.400 1.200"/>
<path d="M575 438.05L669 438.05" stroke="#333" stroke-width="2.2" stroke-dasharray="1.400 1.200"/>
<path d="M481.7 624.5L566 624.5" stroke="#151515" stroke-width="1" />
<path d="M481.7 627.5L566 627.5" stroke="#151515" stroke-width="1" />
<path d="M575 624.5L669 624.5" stroke="#151515" stroke-width="1" />
<path d="M575 627.5L669 627.5" stroke="#151515" stroke-width="1" />
<path d="M482 626.1L566 626.1" stroke="#333" stroke-width="2.2" stroke-dasharray="1.400 1.200"/>
<path d="M575 626.1L669 626.1" stroke="#333" stroke-width="2.2" stroke-dasharray="1.400 1.200"/>
<path d="M669.5 387L669.5 443.9" stroke="#151515" stroke-width="1" />
<path d="M669.5 620.7L669.5 677" stroke="#151515" stroke-width="1" />
<path d="M481.7 443.5L792.5 443.5" stroke="#151515" stroke-width="1.1" />
<path d="M536.5 445.5L700 445.5" stroke="#151515" stroke-width="1" />
<path d="M481.7 619.5L792.5 619.5" stroke="#151515" stroke-width="1.1" />
<path d="M536.5 617.5L700 617.5" stroke="#151515" stroke-width="1" />
<path d="M537 444.8L560 444.8" stroke="#222" stroke-width="1.6" stroke-dasharray="1.500 1.500"/>
<path d="M640 444.8L670 444.8" stroke="#222" stroke-width="1.6" stroke-dasharray="1.500 1.500"/>
<path d="M537 618.4L560 618.4" stroke="#222" stroke-width="1.6" stroke-dasharray="1.500 1.500"/>
<path d="M640 618.4L670 618.4" stroke="#222" stroke-width="1.6" stroke-dasharray="1.500 1.500"/>
<path d="M536.5 443.9L536.5 619.2" stroke="#151515" stroke-width="1" />
<path d="M605.5 445.7L605.5 617.6" stroke="#151515" stroke-width="0.7" />
<rect x="563.3" y="455.3" width="14.4" height="5.2" stroke="#151515" stroke-width="0.9" fill="none" />
<path d="M565 455.9V459.9M566.800 455.9V459.9M568.600 455.9V459.9M570.600 455.9V459.9M573.300 455.9V459.9" stroke="#111" stroke-width="1.100"/>
<rect x="563.3" y="465.92" width="14.4" height="5.2" stroke="#151515" stroke-width="0.9" fill="none" />
<path d="M565 466.52V470.52M566.800 466.52V470.52M568.600 466.52V470.52M570.600 466.52V470.52M573.300 466.52V470.52" stroke="#111" stroke-width="1.100"/>
<rect x="563.3" y="476.54" width="14.4" height="5.2" stroke="#151515" stroke-width="0.9" fill="none" />
<path d="M565 477.14V481.14M566.800 477.14V481.14M568.600 477.14V481.14M570.600 477.14V481.14M573.300 477.14V481.14" stroke="#111" stroke-width="1.100"/>
<rect x="563.3" y="487.16" width="14.4" height="5.2" stroke="#151515" stroke-width="0.9" fill="none" />
<path d="M565 487.76V491.76M566.800 487.76V491.76M568.600 487.76V491.76M570.600 487.76V491.76M573.300 487.76V491.76" stroke="#111" stroke-width="1.100"/>
<rect x="563.3" y="497.78" width="14.4" height="5.2" stroke="#151515" stroke-width="0.9" fill="none" />
<path d="M565 498.38V502.38M566.800 498.38V502.38M568.600 498.38V502.38M570.600 498.38V502.38M573.300 498.38V502.38" stroke="#111" stroke-width="1.100"/>
<rect x="563.3" y="508.4" width="14.4" height="5.2" stroke="#151515" stroke-width="0.9" fill="none" />
<path d="M565 509V513M566.800 509V513M568.600 509V513M570.600 509V513M573.300 509V513" stroke="#111" stroke-width="1.100"/>
<rect x="563.3" y="519.02" width="14.4" height="5.2" stroke="#151515" stroke-width="0.9" fill="none" />
<path d="M565 519.62V523.62M566.800 519.62V523.62M568.600 519.62V523.62M570.600 519.62V523.62M573.300 519.62V523.62" stroke="#111" stroke-width="1.100"/>
<rect x="563.3" y="529.64" width="14.4" height="5.2" stroke="#151515" stroke-width="0.9" fill="none" />
<path d="M565 530.24V534.24M566.800 530.24V534.24M568.600 530.24V534.24M570.600 530.24V534.24M573.300 530.24V534.24" stroke="#111" stroke-width="1.100"/>
<rect x="563.3" y="540.26" width="14.4" height="5.2" stroke="#151515" stroke-width="0.9" fill="none" />
<path d="M565 540.86V544.86M566.800 540.86V544.86M568.600 540.86V544.86M570.600 540.86V544.86M573.300 540.86V544.86" stroke="#111" stroke-width="1.100"/>
<rect x="563.3" y="550.88" width="14.4" height="5.2" stroke="#151515" stroke-width="0.9" fill="none" />
<path d="M565 551.48V555.48M566.800 551.48V555.48M568.600 551.48V555.48M570.600 551.48V555.48M573.300 551.48V555.48" stroke="#111" stroke-width="1.100"/>
<rect x="563.3" y="561.5" width="14.4" height="5.2" stroke="#151515" stroke-width="0.9" fill="none" />
<path d="M565 562.1V566.1M566.800 562.1V566.1M568.600 562.1V566.1M570.600 562.1V566.1M573.300 562.1V566.1" stroke="#111" stroke-width="1.100"/>
<rect x="563.3" y="572.12" width="14.4" height="5.2" stroke="#151515" stroke-width="0.9" fill="none" />
<path d="M565 572.72V576.72M566.800 572.72V576.72M568.600 572.72V576.72M570.600 572.72V576.72M573.300 572.72V576.72" stroke="#111" stroke-width="1.100"/>
<rect x="563.3" y="582.74" width="14.4" height="5.2" stroke="#151515" stroke-width="0.9" fill="none" />
<path d="M565 583.34V587.34M566.800 583.34V587.34M568.600 583.34V587.34M570.600 583.34V587.34M573.300 583.34V587.34" stroke="#111" stroke-width="1.100"/>
<rect x="563.3" y="593.36" width="14.4" height="5.2" stroke="#151515" stroke-width="0.9" fill="none" />
<path d="M565 593.96V597.96M566.800 593.96V597.96M568.600 593.96V597.96M570.600 593.96V597.96M573.300 593.96V597.96" stroke="#111" stroke-width="1.100"/>
<rect x="563.3" y="603.98" width="14.4" height="5.2" stroke="#151515" stroke-width="0.9" fill="none" />
<path d="M565 604.58V608.58M566.800 604.58V608.58M568.600 604.58V608.58M570.600 604.58V608.58M573.300 604.58V608.58" stroke="#111" stroke-width="1.100"/>
<path d="M623.5 445.7L623.5 617.6" stroke="#151515" stroke-width="0.6" />
<path d="M625.5 445.7L625.5 617.6" stroke="#151515" stroke-width="0.6" />
<path d="M628.5 445.7L628.5 617.6" stroke="#151515" stroke-width="0.6" />
<path d="M630.5 445.7L630.5 617.6" stroke="#151515" stroke-width="0.6" />
<path d="M631.5 445.7L631.5 617.6" stroke="#151515" stroke-width="0.7" />
<path d="M643.5 445.7L643.5 617.6" stroke="#151515" stroke-width="0.7" />
<path d="M645.5 445.7L645.5 617.6" stroke="#151515" stroke-width="0.6" />
<path d="M647.5 445.7L647.5 617.6" stroke="#151515" stroke-width="0.6" />
<path d="M649.5 445.7L649.5 617.6" stroke="#151515" stroke-width="0.6" />
<path d="M651.5 445.7L651.5 617.6" stroke="#151515" stroke-width="0.6" />
<path d="M656.5 445.7L656.5 617.6" stroke="#151515" stroke-width="0.6" />
<path d="M661.5 445.7L661.5 617.6" stroke="#151515" stroke-width="0.6" />
<path d="M666.5 445.7L666.5 617.6" stroke="#151515" stroke-width="0.6" />
<path d="M668.5 445.7L668.5 617.6" stroke="#151515" stroke-width="0.6" />
<rect x="633.2" y="445.7" width="8.8" height="171.9" stroke="none" stroke-width="0" fill="#0a0a0a" />
<rect x="642" y="445.7" width="1.6" height="171.9" stroke="none" stroke-width="0" fill="#555" />
<path d="M680.5 445.7L680.5 617.6" stroke="#151515" stroke-width="0.7" />
<path d="M698.5 445.7L698.5 619.2" stroke="#151515" stroke-width="1" />
<path d="M698.700 449.8H681.700Q680.900 449.8 680.900 450.6V454.2Q680.900 455 681.700 455H698.700" stroke="#151515" stroke-width="0.8" fill="none" />
<path d="M698.700 460.42H681.700Q680.900 460.42 680.900 461.22V464.82Q680.900 465.62 681.700 465.62H698.700" stroke="#151515" stroke-width="0.8" fill="none" />
<path d="M698.700 471.04H681.700Q680.900 471.04 680.900 471.84V475.44Q680.900 476.24 681.700 476.24H698.700" stroke="#151515" stroke-width="0.8" fill="none" />
<path d="M698.700 481.66H681.700Q680.900 481.66 680.900 482.46V486.06Q680.900 486.86 681.700 486.86H698.700" stroke="#151515" stroke-width="0.8" fill="none" />
<path d="M698.700 492.28H681.700Q680.900 492.28 680.900 493.08V496.68Q680.900 497.48 681.700 497.48H698.700" stroke="#151515" stroke-width="0.8" fill="none" />
<path d="M698.700 502.9H681.700Q680.900 502.9 680.900 503.7V507.3Q680.900 508.1 681.700 508.1H698.700" stroke="#151515" stroke-width="0.8" fill="none" />
<path d="M698.700 513.52H681.700Q680.900 513.52 680.900 514.32V517.92Q680.900 518.72 681.700 518.72H698.700" stroke="#151515" stroke-width="0.8" fill="none" />
<path d="M698.700 524.14H681.700Q680.900 524.14 680.900 524.94V528.54Q680.900 529.34 681.700 529.34H698.700" stroke="#151515" stroke-width="0.8" fill="none" />
<path d="M698.700 534.76H681.700Q680.900 534.76 680.900 535.56V539.16Q680.900 539.96 681.700 539.96H698.700" stroke="#151515" stroke-width="0.8" fill="none" />
<path d="M698.700 545.38H681.700Q680.900 545.38 680.900 546.18V549.78Q680.900 550.58 681.700 550.58H698.700" stroke="#151515" stroke-width="0.8" fill="none" />
<path d="M698.700 556H681.700Q680.900 556 680.900 556.8V560.4Q680.900 561.2 681.700 561.2H698.700" stroke="#151515" stroke-width="0.8" fill="none" />
<path d="M698.700 566.62H681.700Q680.900 566.62 680.900 567.42V571.02Q680.900 571.82 681.700 571.82H698.700" stroke="#151515" stroke-width="0.8" fill="none" />
<path d="M698.700 577.24H681.700Q680.900 577.24 680.900 578.04V581.64Q680.900 582.44 681.700 582.44H698.700" stroke="#151515" stroke-width="0.8" fill="none" />
<path d="M698.700 587.86H681.700Q680.900 587.86 680.900 588.66V592.26Q680.900 593.06 681.700 593.06H698.700" stroke="#151515" stroke-width="0.8" fill="none" />
<path d="M698.700 598.48H681.700Q680.900 598.48 680.900 599.28V602.88Q680.900 603.68 681.700 603.68H698.700" stroke="#151515" stroke-width="0.8" fill="none" />
<path d="M698.700 609.1H681.700Q680.900 609.1 680.900 609.9V613.5Q680.900 614.3 681.700 614.3H698.700" stroke="#151515" stroke-width="0.8" fill="none" />
<path d="M786 445.8L786 619.2" stroke="#151515" stroke-width="1.5" />
<path d="M789.5 445.8L789.5 619.2" stroke="#151515" stroke-width="1" />
<path d="M792.5 443.9L792.5 619.2" stroke="#151515" stroke-width="1" />
<path d="M792.500 443.800C830 438 852 410 857 379" stroke="#151515" stroke-width="1" fill="none" />
<path d="M792.500 442.200C828 436.500 849.500 409 854.600 380.500" stroke="#151515" stroke-width="0.8" fill="none" />
<path d="M792.500 454C838 452 861 416 864 380" stroke="#151515" stroke-width="0.8" fill="none" stroke-dasharray="4 2"/>
<path d="M792.500 443.800V426C812 420 832 400 839 380" stroke="#151515" stroke-width="0.8" fill="none" stroke-dasharray="4 2"/>
<path d="M819 407L836 426" stroke="#151515" stroke-width="0.8" stroke-dasharray="4 2"/>
<path d="M792.500 619.200C830 625 852 653 857 683.300" stroke="#151515" stroke-width="1" fill="none" />
<path d="M792.500 620.800C828 626.500 849.500 654 854.600 682" stroke="#151515" stroke-width="0.8" fill="none" />
<path d="M792.500 611C838 612 861 648 864 683.600" stroke="#151515" stroke-width="0.8" fill="none" stroke-dasharray="4 2"/>
<path d="M792.500 619.200V638C812 643 832 662 839 679" stroke="#151515" stroke-width="0.8" fill="none" stroke-dasharray="4 2"/>
<path d="M819 656L836 637" stroke="#151515" stroke-width="0.8" stroke-dasharray="4 2"/>
<path d="M819.5 445.8L845.6 445.8L868.5 431" stroke="#151515" stroke-width="0.8" fill="none" />
<path d="M845.5 412L845.5 445.8" stroke="#151515" stroke-width="1" />
<path d="M819.5 437.5L862 437.5" stroke="#151515" stroke-width="1" />
<path d="M819.5 619L845.6 619L868.5 633.5" stroke="#151515" stroke-width="0.8" fill="none" />
<path d="M845.5 619L845.5 652" stroke="#151515" stroke-width="1" />
<path d="M819.5 626.5L862 626.5" stroke="#151515" stroke-width="1" />
<path d="M853.5 441L853.5 624" stroke="#151515" stroke-width="1" />
<path d="M858.5 441L858.5 624" stroke="#151515" stroke-width="1" />
<path d="M863.5 436L863.5 629" stroke="#151515" stroke-width="1" />
<path d="M866.5 436L866.5 629" stroke="#151515" stroke-width="1" />
<path d="M868.5 396L868.5 667.7" stroke="#151515" stroke-width="1" />
<path d="M869 431L869 634" stroke="#151515" stroke-width="1.7" />
<path d="M866 396.2L900.800 396.2L1061 400.2" stroke="#151515" stroke-width="0.8" fill="none" />
<path d="M861.5 398L900.800 398L1061 402.45" stroke="#151515" stroke-width="0.8" fill="none" />
<path d="M857 402L900.800 402L1061 406.9" stroke="#151515" stroke-width="0.8" fill="none" />
<path d="M852.5 407L900.800 407L1061 412.35" stroke="#151515" stroke-width="0.8" fill="none" />
<path d="M848 412.5L900.800 412.5L1061 418.3" stroke="#151515" stroke-width="1.3" fill="none" />
<path d="M843.5 416.7L900.800 416.7L1061 422.95" stroke="#151515" stroke-width="0.8" fill="none" />
<path d="M840 421.5L900.800 421.5L1061 428.2" stroke="#151515" stroke-width="0.8" fill="none" />
<path d="M832 426L900.800 426L1061 433.15" stroke="#151515" stroke-width="0.8" fill="none" />
<path d="M824 430.8L900.800 430.8L1061 438.4" stroke="#151515" stroke-width="0.8" fill="none" />
<path d="M826 634.4L993 634.4L1060 636.9" stroke="#151515" stroke-width="0.8" fill="none" />
<path d="M832 639.6L993 639.6L1060 642.1" stroke="#151515" stroke-width="0.8" fill="none" />
<path d="M838 645.8L993 645.8L1060 648.3" stroke="#151515" stroke-width="0.8" fill="none" />
<path d="M844 652L993 652L1060 654.5" stroke="#151515" stroke-width="0.8" fill="none" />
<path d="M850 657.3L993 657.3L1060 659.8" stroke="#151515" stroke-width="0.8" fill="none" />
<path d="M856 662.5L993 662.5L1060 665" stroke="#151515" stroke-width="1.2" fill="none" />
<path d="M862 666.7L993 666.7L1060 669.2" stroke="#151515" stroke-width="1.2" fill="none" />
<path d="M900.5 384.4L900.5 666.7" stroke="#151515" stroke-width="1" />
<path d="M931.5 400L931.5 662" stroke="#151515" stroke-width="1" />
<path d="M963.5 404L963.5 658" stroke="#151515" stroke-width="1" />
<path d="M997.7 402L992.5 665" stroke="#151515" stroke-width="1" />
<path d="M1031 413L1020.6 651" stroke="#151515" stroke-width="1" />
<path d="M1062.3 404L1046.7 665" stroke="#151515" stroke-width="1" />
<path d="M857 378.7L900.8 379.6L931 384L997 393L1030 396L1076 400" stroke="#151515" stroke-width="0.9" fill="none" />
<path d="M869 396L900.8 396" stroke="#151515" stroke-width="0.9" fill="none" />
<path d="M900.8 384.4L931 389L997.7 402L1062.3 404.2" stroke="#151515" stroke-width="0.9" fill="none" />
<path d="M900.8 396.5L931.7 401.5L963 404.5L997 411L1031 413L1071 415.5" stroke="#151515" stroke-width="1.2" fill="none" />
<path d="M1031 424L1071 433.5" stroke="#151515" stroke-width="0.8" fill="none" />
<path d="M857 684.4L900.8 684.4" stroke="#151515" stroke-width="0.8" fill="none" />
<path d="M866 667.7L900.8 666.7L931.7 662L963.3 658L992.5 653L1020.6 651L1062 655" stroke="#151515" stroke-width="1" fill="none" />
<path d="M905 678L992.5 668.7L1046.7 665.5L1061 673" stroke="#151515" stroke-width="0.9" fill="none" />
<path d="M1020.6 651L1062 637.5" stroke="#151515" stroke-width="0.8" fill="none" />
<path d="M1046.7 665L1046.7 655" stroke="#151515" stroke-width="0.8" fill="none" />
<path d="M900.5 666.7L900.5 684.4" stroke="#151515" stroke-width="1" />
<path d="M853 351.3L875.8 351.3L894.6 388.5" stroke="#151515" stroke-width="0.8" fill="none" />
<path d="M936 360.4L954 360.4L966.5 400" stroke="#151515" stroke-width="0.8" fill="none" />
<path d="M1022 374L1039.4 374L1060 408.3" stroke="#151515" stroke-width="0.8" fill="none" />
<path d="M876 696.5L890 696.5L898 676" stroke="#151515" stroke-width="0.8" fill="none" />
<path d="M944 689L958.5 689L973 665" stroke="#151515" stroke-width="0.8" fill="none" />
<path d="M1008 682L1022 682L1039 661" stroke="#151515" stroke-width="0.8" fill="none" />
<path d="M904 676.500V689.500L907 686.800L909.300 691.500L911 690.700L908.800 686.200H912.600Z" stroke="#111" stroke-width="0.7" fill="#fff" />
<text x="325.4" y="559" font-size="12.5" text-anchor="middle" class="s" >I<tspan font-size="6.500" dy="2">1</tspan></text>
<text x="355.6" y="558" font-size="12.5" text-anchor="middle" class="s" >I<tspan font-size="6.500" dy="2">2</tspan></text>
<text x="388" y="556" font-size="12.5" text-anchor="middle" class="s" >I<tspan font-size="6.500" dy="2">3</tspan></text>
<text x="420.8" y="557.5" font-size="12.5" text-anchor="middle" class="s" >I<tspan font-size="6.500" dy="2">5</tspan></text>
<text x="447.3" y="554" font-size="12.5" text-anchor="middle" class="s" >I<tspan font-size="6.500" dy="2">8</tspan></text>
<text x="515" y="533" font-size="12.5" text-anchor="middle" class="s" >I<tspan font-size="6.500" dy="2">25</tspan></text>
<text x="597" y="517" font-size="12.5" text-anchor="middle" class="s" >I<tspan font-size="6.500" dy="2">26</tspan></text>
<text x="661.5" y="521" font-size="12.5" text-anchor="middle" class="s" >I<tspan font-size="6.500" dy="2">27</tspan></text>
<text x="769" y="525.5" font-size="12.5" text-anchor="middle" class="s" >I<tspan font-size="6.500" dy="2">29</tspan></text>
<text x="836.5" y="518.5" font-size="12.5" text-anchor="middle" class="s" >I<tspan font-size="6.500" dy="2">30</tspan></text>
<text x="886.5" y="512" font-size="12.5" text-anchor="middle" class="s" >I<tspan font-size="6.500" dy="2">33</tspan></text>
<text x="912.5" y="512" font-size="12.5" text-anchor="middle" class="s" >I<tspan font-size="6.500" dy="2">34</tspan></text>
<text x="954.5" y="511" font-size="12.5" text-anchor="middle" class="s" >I<tspan font-size="6.500" dy="2">35</tspan></text>
<text x="982" y="512" font-size="12.5" text-anchor="middle" class="s" >I<tspan font-size="6.500" dy="2">36</tspan></text>
<text x="1013.5" y="512" font-size="12.5" text-anchor="middle" class="s" >I<tspan font-size="6.500" dy="2">37</tspan></text>
<text x="1044" y="509" font-size="12.5" text-anchor="middle" class="s" >I<tspan font-size="6.500" dy="2">38</tspan></text>
<text x="346.5" y="410.5" font-size="6.9" text-anchor="middle" class="s" >XIXa</text>
<text x="403" y="411" font-size="6.9" text-anchor="middle" class="s" >VIIa</text>
<text x="437" y="418.5" font-size="6.9" text-anchor="middle" class="s" >VIIIa</text>
<text x="529.5" y="424" font-size="6.9" text-anchor="middle" class="s" >XIa</text>
<text x="638" y="415.5" font-size="6.9" text-anchor="middle" class="s" >Xa</text>
<text x="733.5" y="417.5" font-size="6.9" text-anchor="middle" class="s" >XIIIa</text>
<text x="324.5" y="646.5" font-size="6.9" text-anchor="middle" class="s" >VIIa</text>
<text x="396" y="647.5" font-size="6.9" text-anchor="middle" class="s" >VIIIa</text>
<text x="441" y="637" font-size="6.9" text-anchor="middle" class="s" >XIXa</text>
<text x="510" y="671.5" font-size="6.9" text-anchor="middle" class="s" >XIIIa</text>
<text x="638" y="659" font-size="6.9" text-anchor="middle" class="s" >Xa</text>
<text x="729" y="651.5" font-size="6.9" text-anchor="middle" class="s" >XIIIa</text>
<text x="864" y="350.8" font-size="6.9" text-anchor="middle" class="s" >XIIIa</text>
<text x="945.5" y="358.5" font-size="6.9" text-anchor="middle" class="s" >XIVa</text>
<text x="1031" y="372" font-size="6.9" text-anchor="middle" class="s" >XIVa</text>
<text x="884" y="695.5" font-size="6.9" text-anchor="middle" class="s" >Xa</text>
<text x="952" y="688" font-size="6.9" text-anchor="middle" class="s" >XIa</text>
<text x="1015.5" y="681" font-size="6.9" text-anchor="middle" class="s" >XIa</text>
<path d="M481.7 446.5L536.5 446.5" stroke="#151515" stroke-width="1" />
<path d="M481.7 483.5L536.5 483.5" stroke="#151515" stroke-width="1" />
<rect x="481" y="447.6" width="24" height="13" fill="url(#cyl)"/>
<rect x="481" y="462.4" width="24" height="7.4" fill="url(#cyl)"/>
<rect x="481" y="471.7" width="24" height="12" fill="url(#cyl)"/>
<path d="M508.5 446.7L508.5 486.5" stroke="#151515" stroke-width="0.7" />
<path d="M510.5 446.7L510.5 486.5" stroke="#151515" stroke-width="0.7" />
<path d="M512.5 446.7L512.5 486.5" stroke="#151515" stroke-width="0.7" />
<path d="M515.5 446.7L515.5 486.5" stroke="#151515" stroke-width="0.7" />
<path d="M523.5 446.7L523.5 486.5" stroke="#151515" stroke-width="0.7" />
<path d="M513 459.5L519 459.5" stroke="#151515" stroke-width="0.6" />
<path d="M465 578.5L536.5 578.5" stroke="#151515" stroke-width="1" />
<path d="M465 617.5L536.5 617.5" stroke="#151515" stroke-width="1" />
<rect x="465" y="579" width="40" height="4.7" fill="url(#cyl2)"/>
<rect x="465" y="585.5" width="40" height="6.5" fill="url(#cyl2)"/>
<rect x="465" y="593" width="40" height="10" fill="url(#cyl2)"/>
<rect x="465" y="604" width="40" height="12" fill="url(#cyl2)"/>
<path d="M508.5 578L508.5 619" stroke="#151515" stroke-width="0.7" />
<path d="M510.5 578L510.5 619" stroke="#151515" stroke-width="0.7" />
<path d="M512.5 578L512.5 619" stroke="#151515" stroke-width="0.7" />
<path d="M515.5 578L515.5 619" stroke="#151515" stroke-width="0.7" />
<path d="M523.5 578L523.5 619" stroke="#151515" stroke-width="0.7" />
<path d="M513 598.5L519 598.5" stroke="#151515" stroke-width="0.6" />
<rect x="475.4" y="486.5" width="61.1" height="90.7" stroke="#151515" stroke-width="0.9" fill="none" />
<rect x="478" y="489.3" width="10.3" height="85.1" stroke="none" stroke-width="0" fill="#050505" />
<path d="M476.5 488L476.5 576" stroke="#151515" stroke-width="0.6" />
<path d="M490.5 489L490.5 575" stroke="#151515" stroke-width="0.6" />
<rect x="478" y="514.1" width="43.7" height="6.4" stroke="none" stroke-width="0" fill="#0a0a0a" />
<rect x="492" y="515.8" width="12" height="3" fill="#fff"/><rect x="507" y="515.8" width="9" height="3" fill="#fff"/><circle cx="483" cy="517.3" r="1.600" fill="#fff"/><circle cx="488.500" cy="517.3" r="1.600" fill="#fff"/>
<path d="M489 508.8L519.8 514.3" stroke="#0a0a0a" stroke-width="1.6" fill="none" />
<path d="M489 525.8L519.8 520.3" stroke="#0a0a0a" stroke-width="1.6" fill="none" />
<path d="M489 506.3L512 511.3" stroke="#151515" stroke-width="0.7" fill="none" />
<path d="M489 528.3L512 523.3" stroke="#151515" stroke-width="0.7" fill="none" />
<rect x="524.400" y="514.7" width="12.100" height="5.200" fill="url(#cyl)"/>
<rect x="478" y="543.9" width="43.7" height="6.4" stroke="none" stroke-width="0" fill="#0a0a0a" />
<rect x="492" y="545.6" width="12" height="3" fill="#fff"/><rect x="507" y="545.6" width="9" height="3" fill="#fff"/><circle cx="483" cy="547.1" r="1.600" fill="#fff"/><circle cx="488.500" cy="547.1" r="1.600" fill="#fff"/>
<path d="M489 538.6L519.8 544.1" stroke="#0a0a0a" stroke-width="1.6" fill="none" />
<path d="M489 555.6L519.8 550.1" stroke="#0a0a0a" stroke-width="1.6" fill="none" />
<path d="M489 536.1L512 541.1" stroke="#151515" stroke-width="0.7" fill="none" />
<path d="M489 558.1L512 553.1" stroke="#151515" stroke-width="0.7" fill="none" />
<rect x="524.400" y="544.5" width="12.100" height="5.200" fill="url(#cyl)"/>
<path d="M489 491L519.8 493.5" stroke="#0a0a0a" stroke-width="1.8" fill="none" />
<path d="M489 573L519.8 570.5" stroke="#0a0a0a" stroke-width="1.8" fill="none" />
<path d="M489 494L512 497" stroke="#151515" stroke-width="0.7" fill="none" />
<path d="M489 570L512 567" stroke="#151515" stroke-width="0.7" fill="none" />
<circle cx="495" cy="490.500" r="1.300" fill="#0a0a0a"/><circle cx="495" cy="573.500" r="1.300" fill="#0a0a0a"/>
<circle cx="503" cy="490.500" r="1.300" fill="#0a0a0a"/><circle cx="503" cy="573.500" r="1.300" fill="#0a0a0a"/>
<circle cx="511" cy="490.500" r="1.300" fill="#0a0a0a"/><circle cx="511" cy="573.500" r="1.300" fill="#0a0a0a"/>
<path d="M492.5 496L492.5 509" stroke="#151515" stroke-width="0.5" />
<path d="M492.5 525L492.5 539" stroke="#151515" stroke-width="0.5" />
<path d="M492.5 555L492.5 568" stroke="#151515" stroke-width="0.5" />
<path d="M494.5 496L494.5 509" stroke="#151515" stroke-width="0.5" />
<path d="M494.5 525L494.5 539" stroke="#151515" stroke-width="0.5" />
<path d="M494.5 555L494.5 568" stroke="#151515" stroke-width="0.5" />
<path d="M497.5 496L497.5 509" stroke="#151515" stroke-width="0.5" />
<path d="M497.5 525L497.5 539" stroke="#151515" stroke-width="0.5" />
<path d="M497.5 555L497.5 568" stroke="#151515" stroke-width="0.5" />
<path d="M499.5 496L499.5 509" stroke="#151515" stroke-width="0.5" />
<path d="M499.5 525L499.5 539" stroke="#151515" stroke-width="0.5" />
<path d="M499.5 555L499.5 568" stroke="#151515" stroke-width="0.5" />
<path d="M502.5 496L502.5 509" stroke="#151515" stroke-width="0.5" />
<path d="M502.5 525L502.5 539" stroke="#151515" stroke-width="0.5" />
<path d="M502.5 555L502.5 568" stroke="#151515" stroke-width="0.5" />
<path d="M504.5 496L504.5 509" stroke="#151515" stroke-width="0.5" />
<path d="M504.5 525L504.5 539" stroke="#151515" stroke-width="0.5" />
<path d="M504.5 555L504.5 568" stroke="#151515" stroke-width="0.5" />
<path d="M507.5 496L507.5 509" stroke="#151515" stroke-width="0.5" />
<path d="M507.5 525L507.5 539" stroke="#151515" stroke-width="0.5" />
<path d="M507.5 555L507.5 568" stroke="#151515" stroke-width="0.5" />
<rect x="526.3" y="493.9" width="10.2" height="6.5" stroke="#151515" stroke-width="0.8" fill="none" />
<rect x="526.3" y="505" width="10.2" height="6.5" stroke="#151515" stroke-width="0.8" fill="none" />
<rect x="526.3" y="523.5" width="10.2" height="6.5" stroke="#151515" stroke-width="0.8" fill="none" />
<rect x="526.3" y="534.6" width="10.2" height="6.5" stroke="#151515" stroke-width="0.8" fill="none" />
<rect x="526.3" y="553.1" width="10.2" height="6.5" stroke="#151515" stroke-width="0.8" fill="none" />
<rect x="526.3" y="563.3" width="10.2" height="6.5" stroke="#151515" stroke-width="0.8" fill="none" />
<path d="M511.5 502L518 502" stroke="#151515" stroke-width="0.6" />
<path d="M511.5 531.3L518 531.3" stroke="#151515" stroke-width="0.6" />
<path d="M511.5 560L518 560" stroke="#151515" stroke-width="0.6" />
<rect x="524.4" y="440" width="12.1" height="5.7" fill="url(#cyl)"/>
<rect x="524.4" y="486.5" width="12.1" height="3.5" fill="url(#cyl)"/>
<rect x="524.4" y="573.5" width="12.1" height="3.7" fill="url(#cyl)"/>
<rect x="524.4" y="619" width="12.1" height="5.6" fill="url(#cyl)"/>
<path d="M466 486.500H461.500L458.700 488.800L461.500 491H466" stroke="#151515" stroke-width="0.8" fill="none" />
<path d="M466 573.500H461.500L458.700 575.800L461.500 578H466" stroke="#151515" stroke-width="0.8" fill="none" />
<rect x="467.5" y="489" width="8" height="31" stroke="#151515" stroke-width="0.8" fill="none" />
<rect x="467.5" y="523" width="8" height="10" stroke="#151515" stroke-width="0.8" fill="none" />
<rect x="464.500" y="546.500" width="5" height="1.600" fill="#e8e800"/>
<path d="M497.200 449V459M497.200 473V482M497.200 596V602M497.200 606V614" stroke="#e8e800" stroke-width=".7"/>
<text x="636.5" y="744" font-size="16.5" text-anchor="middle" class="s" textLength="121" lengthAdjust="spacingAndGlyphs">MẶT CẮT DỌC</text>
<text x="636" y="759" font-size="11" text-anchor="middle" class="s" textLength="60">Tỷ lệ: 1:250</text>
<path d="M303.5 780.5L1050.4 780.5" stroke="#151515" stroke-width="1" />
<path d="M303.5 780.8L303.5 787.5" stroke="#151515" stroke-width="1" />
<path d="M460.5 780.8L460.5 787.5" stroke="#151515" stroke-width="1" />
<path d="M532.5 780.8L532.5 787.5" stroke="#151515" stroke-width="1" />
<path d="M601.5 780.8L601.5 787.5" stroke="#151515" stroke-width="1" />
<path d="M694.5 780.8L694.5 787.5" stroke="#151515" stroke-width="1" />
<path d="M788.5 780.8L788.5 787.5" stroke="#151515" stroke-width="1" />
<path d="M1050.5 780.8L1050.5 787.5" stroke="#151515" stroke-width="1" />
<text x="382.7" y="779.3" font-size="6.9" text-anchor="middle" class="n" >5930</text>
<text x="496" y="779.3" font-size="6.9" text-anchor="middle" class="n" >2700</text>
<text x="567" y="779.3" font-size="6.9" text-anchor="middle" class="n" >2600</text>
<text x="647" y="779.3" font-size="6.9" text-anchor="middle" class="n" >3500</text>
<text x="741" y="779.3" font-size="6.9" text-anchor="middle" class="n" >3560</text>
<text x="919" y="779.3" font-size="6.9" text-anchor="middle" class="n" >9900</text>
<path d="M454.6 793.5L520 793.5" stroke="#151515" stroke-width="0.7" />
<path d="M454.6 802.5L520 802.5" stroke="#151515" stroke-width="0.7" />
<path d="M454.5 793.7L454.5 810" stroke="#151515" stroke-width="0.6" />
<path d="M461.5 793.7L461.5 810" stroke="#151515" stroke-width="0.6" />
<path d="M471.5 793.7L471.5 810" stroke="#151515" stroke-width="0.6" />
<path d="M478.5 793.7L478.5 810" stroke="#151515" stroke-width="0.6" />
<path d="M504.5 793.7L504.5 810" stroke="#151515" stroke-width="0.6" />
<path d="M512.5 793.7L512.5 810" stroke="#151515" stroke-width="0.6" />
<path d="M520.5 793.7L520.5 810" stroke="#151515" stroke-width="0.6" />
<path d="M467.7 790L467.7 870" stroke="#222" stroke-width="0.8" stroke-dasharray="9 2 2 2"/>
<text x="461.5" y="792.8" font-size="6.67" text-anchor="middle" class="n" >545</text>
<text x="474" y="792.8" font-size="6.67" text-anchor="middle" class="n" >380</text>
<text x="491" y="792.8" font-size="6.67" text-anchor="middle" class="n" >920</text>
<text x="508" y="792.8" font-size="6.67" text-anchor="middle" class="n" >380</text>
<text x="458" y="801.3" font-size="6.67" text-anchor="middle" class="n" >245</text>
<text x="474.5" y="801.3" font-size="6.67" text-anchor="middle" class="n" >280</text>
<text x="496" y="801.3" font-size="6.67" text-anchor="middle" class="n" >1300</text>
<text x="516.5" y="801.3" font-size="6.67" text-anchor="middle" class="n" >240</text>
<path d="M532 835.5L788.3 835.5" stroke="#151515" stroke-width="1" />
<path d="M532.5 835L532.5 841.5" stroke="#151515" stroke-width="1" />
<path d="M561.5 835L561.5 841.5" stroke="#151515" stroke-width="1" />
<path d="M601.5 835L601.5 841.5" stroke="#151515" stroke-width="1" />
<path d="M641.5 835L641.5 841.5" stroke="#151515" stroke-width="1" />
<path d="M694.5 835L694.5 841.5" stroke="#151515" stroke-width="1" />
<path d="M788.5 835L788.5 841.5" stroke="#151515" stroke-width="1" />
<text x="545.5" y="833.5" font-size="6.9" text-anchor="middle" class="n" >1090</text>
<text x="581" y="833.5" font-size="6.9" text-anchor="middle" class="n" >1510</text>
<text x="621" y="833.5" font-size="6.9" text-anchor="middle" class="n" >1500</text>
<text x="667.5" y="833.5" font-size="6.9" text-anchor="middle" class="n" >2000</text>
<text x="741" y="833.5" font-size="6.9" text-anchor="middle" class="n" >3560</text>
<path d="M303.5 932.5L303.5 940" stroke="#151515" stroke-width="1" />
<path d="M334.5 932.5L334.5 940" stroke="#151515" stroke-width="1" />
<path d="M366.5 932.5L366.5 940" stroke="#151515" stroke-width="1" />
<path d="M397.5 932.5L397.5 940" stroke="#151515" stroke-width="1" />
<path d="M428.5 932.5L428.5 940" stroke="#151515" stroke-width="1" />
<path d="M459.5 932.5L459.5 940" stroke="#151515" stroke-width="1" />
<path d="M474.5 932.5L474.5 940" stroke="#151515" stroke-width="1" />
<path d="M531.5 932.5L531.5 940" stroke="#151515" stroke-width="1" />
<path d="M561.5 932.5L561.5 940" stroke="#151515" stroke-width="1" />
<path d="M601.5 932.5L601.5 940" stroke="#151515" stroke-width="1" />
<path d="M694.5 932.5L694.5 940" stroke="#151515" stroke-width="1" />
<path d="M788.5 932.5L788.5 940" stroke="#151515" stroke-width="1" />
<path d="M814.5 932.5L814.5 940" stroke="#151515" stroke-width="1" />
<path d="M841.5 932.5L841.5 940" stroke="#151515" stroke-width="1" />
<path d="M864.5 932.5L864.5 940" stroke="#151515" stroke-width="1" />
<path d="M896.5 932.5L896.5 940" stroke="#151515" stroke-width="1" />
<path d="M927.5 932.5L927.5 940" stroke="#151515" stroke-width="1" />
<path d="M958.5 932.5L958.5 940" stroke="#151515" stroke-width="1" />
<path d="M990.5 932.5L990.5 940" stroke="#151515" stroke-width="1" />
<path d="M1021.5 932.5L1021.5 940" stroke="#151515" stroke-width="1" />
<path d="M1050.5 932.5L1050.5 940" stroke="#151515" stroke-width="1" />
<text x="319" y="939.3" font-size="6.67" text-anchor="middle" class="n" >1180</text>
<text x="350.5" y="939.3" font-size="6.67" text-anchor="middle" class="n" >1180</text>
<text x="381.5" y="939.3" font-size="6.67" text-anchor="middle" class="n" >1180</text>
<text x="413" y="939.3" font-size="6.67" text-anchor="middle" class="n" >1180</text>
<text x="444" y="939.3" font-size="6.67" text-anchor="middle" class="n" >1180</text>
<text x="467" y="939.3" font-size="6.67" text-anchor="middle" class="n" >545</text>
<text x="497" y="937.5" font-size="6.67" text-anchor="middle" class="n" >2185</text>
<text x="546.5" y="939.3" font-size="6.67" text-anchor="middle" class="n" >1090</text>
<text x="581" y="939.3" font-size="6.67" text-anchor="middle" class="n" >1510</text>
<text x="626" y="939.3" font-size="6.67" text-anchor="middle" class="n" >1870</text>
<text x="741" y="939.3" font-size="6.67" text-anchor="middle" class="n" >3560</text>
<text x="801.5" y="939.3" font-size="6.67" text-anchor="middle" class="n" >1000</text>
<text x="828" y="939.3" font-size="6.67" text-anchor="middle" class="n" >1000</text>
<text x="853" y="939.3" font-size="6.67" text-anchor="middle" class="n" >900</text>
<text x="880" y="939.3" font-size="6.67" text-anchor="middle" class="n" >1180</text>
<text x="911.7" y="939.3" font-size="6.67" text-anchor="middle" class="n" >1180</text>
<text x="943" y="939.3" font-size="6.67" text-anchor="middle" class="n" >1180</text>
<text x="974" y="939.3" font-size="6.67" text-anchor="middle" class="n" >1180</text>
<text x="1005.4" y="939.3" font-size="6.67" text-anchor="middle" class="n" >1180</text>
<text x="1035.8" y="939.3" font-size="6.67" text-anchor="middle" class="n" >1100</text>
<path d="M330.5 906L330.5 923" stroke="#151515" stroke-width="1" />
<path d="M488.5 915L488.5 940" stroke="#151515" stroke-width="1" />
<path d="M505.5 897L505.5 933L508.5 933" stroke="#151515" stroke-width="0.7" fill="none" />
<path d="M300.4 878.7L460.8 829.5" stroke="#151515" stroke-width="0.9" fill="none" />
<path d="M300.4 878.7L302 880.3L460.8 880.3" stroke="#151515" stroke-width="0.9" fill="none" />
<path d="M411 844.5L460.8 844.5" stroke="#151515" stroke-width="1" />
<path d="M384.5 853.5L460.8 853.5" stroke="#151515" stroke-width="1" />
<path d="M357 861.5L460.8 861.5" stroke="#151515" stroke-width="1" />
<path d="M330 869.5L460.8 869.5" stroke="#151515" stroke-width="1" />
<path d="M366.5 859L366.5 880.3" stroke="#151515" stroke-width="0.7" />
<path d="M397.5 849L397.5 880.3" stroke="#151515" stroke-width="0.7" />
<path d="M428.5 839.5L428.5 880.3" stroke="#151515" stroke-width="0.7" />
<rect x="359.5" y="856.3" width="9" height="4.7" stroke="#151515" stroke-width="0.7" fill="none" />
<path d="M338 891.5L357 891.5L375 879" stroke="#151515" stroke-width="0.8" fill="none" />
<circle cx="348" cy="834" r=".8" fill="#111"/><circle cx="392" cy="831" r=".8" fill="#111"/>
<path d="M460.5 826L460.5 880.3" stroke="#151515" stroke-width="1" />
<path d="M460.8 829.5L506.7 829.5" stroke="#151515" stroke-width="1" />
<rect x="460.8" y="825.2" width="16.7" height="3.6" stroke="none" stroke-width="0" fill="#0a0a0a" />
<rect x="481.7" y="825.6" width="25" height="2.6" stroke="none" stroke-width="0" fill="#0a0a0a" />
<path d="M505 828L507.7 828L507.7 836.5L517.5 836.5L517.5 848.3" stroke="#0a0a0a" stroke-width="2.4" fill="none" />
<rect x="505.6" y="818.7" width="15.7" height="2.6" stroke="none" stroke-width="0" fill="#0a0a0a" />
<rect x="507.7" y="821.3" width="11.3" height="7" stroke="#0a0a0a" stroke-width="1" fill="none" />
<rect x="510" y="822.3" width="3.2" height="3.4" stroke="none" stroke-width="0" fill="#0a0a0a" />
<rect x="514" y="822.3" width="3.2" height="3.4" stroke="none" stroke-width="0" fill="#0a0a0a" />
<path d="M503 816V828M513.500 816V833" stroke="#e8e800" stroke-width=".7"/>
<path d="M519 828.500C526 838 528 858 531 872C533 884 538 891 548 893.500C556 895 570 894.500 580 894.500" stroke="#151515" stroke-width="1" fill="none" />
<path d="M520.2 829L532.4 846L532.4 889L520.2 889Z" stroke="#151515" stroke-width="0.8" fill="#f4f4f4" />
<path d="M522.5 834.52L522.5 889" stroke="#333" stroke-width="0.6" />
<path d="M524.5 837.32L524.5 889" stroke="#333" stroke-width="0.6" />
<path d="M526.5 840.12L526.5 889" stroke="#333" stroke-width="0.6" />
<rect x="527.6" y="846" width="4.8" height="43" stroke="none" stroke-width="0" fill="#1d1d1d" />
<path d="M529.5 848L529.5 888" stroke="#888" stroke-width="0.5" />
<path d="M522 845.5L541 845.5" stroke="#151515" stroke-width="2.2" />
<path d="M460.8 837.5L519 837.5" stroke="#151515" stroke-width="1" />
<path d="M460.8 844.5L519 844.5" stroke="#151515" stroke-width="1" />
<path d="M460.8 851.5L522 851.5" stroke="#151515" stroke-width="1" />
<path d="M460.8 858.5L522 858.5" stroke="#151515" stroke-width="1" />
<path d="M460.8 865.5L522 865.5" stroke="#151515" stroke-width="1" />
<path d="M460.800 859C472 859 478 856 486 859C498 864 505 878 513 886C520 892 530 893 540 893.500" stroke="#151515" stroke-width="0.9" fill="none" />
<path d="M470 866C472 872 478 874 486 874" stroke="#151515" stroke-width="0.8" fill="none" />
<path d="M486 874H492V880H500V886H508V891H518" stroke="#151515" stroke-width="0.7" fill="none" />
<path d="M460.8 880.3L468 880.3L471.5 877.5L474.4 880.3L474.4 897" stroke="#151515" stroke-width="0.9" fill="none" />
<path d="M533 858.5L641 858.5" stroke="#151515" stroke-width="1" />
<path d="M533 865.5L654.6 865.5" stroke="#151515" stroke-width="1" />
<path d="M474.4 873.5L668 873.5" stroke="#151515" stroke-width="1" />
<path d="M474.4 881.5L682.3 881.5" stroke="#151515" stroke-width="1" />
<path d="M474.4 889.5L694 889.5" stroke="#151515" stroke-width="1" />
<path d="M474.4 897.5L658.7 897.5" stroke="#151515" stroke-width="1" />
<path d="M474.4 897L474.4 904.5L482 904.5L485.8 901.7L652.5 901.7" stroke="#151515" stroke-width="0.9" fill="none" />
<path d="M601.5 858L601.5 894" stroke="#151515" stroke-width="0.7" />
<path d="M546 858L641 858L694 887.5" stroke="#151515" stroke-width="0.9" fill="none" />
<path d="M533 851L546 858" stroke="#151515" stroke-width="0.9" fill="none" />
<path d="M556 897L561 889.500H578L583 897" stroke="#151515" stroke-width="0.8" fill="none" />
<path d="M620 897L628 885C631 882 636 882 640 885L656 897" stroke="#151515" stroke-width="0.9" fill="none" />
<path d="M622 897L627 890.500H649L652 894" stroke="#151515" stroke-width="0.7" fill="none" />
<path d="M652.500 901.700C662 906 668 916 678 919.500C684 921 690 921 694.200 921" stroke="#151515" stroke-width="1" fill="none" />
<path d="M658.700 897C668 901 674 911 684 914C688 915 691 915 694.200 915" stroke="#151515" stroke-width="0.9" fill="none" />
<path d="M680 922L686 918" stroke="#151515" stroke-width="0.8" />
<path d="M680 918L686 922" stroke="#151515" stroke-width="0.8" />
<path d="M694.2 887.5L854 887.5" stroke="#151515" stroke-width="1" />
<path d="M683 881L694.2 887.5" stroke="#151515" stroke-width="0.9" fill="none" />
<path d="M694.2 892.5L788.3 892.5" stroke="#151515" stroke-width="0.7" />
<path d="M694.2 898.5L788.3 898.5" stroke="#151515" stroke-width="0.7" />
<path d="M694.2 903.5L788.3 903.5" stroke="#151515" stroke-width="0.7" />
<path d="M694.2 908.5L788.3 908.5" stroke="#151515" stroke-width="0.7" />
<path d="M694.2 914.5L770 914.5" stroke="#151515" stroke-width="0.7" />
<path d="M694.5 887.5L694.5 925" stroke="#151515" stroke-width="1" />
<path d="M788.5 887.5L788.5 925" stroke="#151515" stroke-width="1" />
<path d="M694.2 925L697 925L701 921L779 921L783 925L788.3 925L792 925L796 917L815 912L841.5 909L864.4 907.3" stroke="#151515" stroke-width="0.9" fill="none" />
<path d="M770 914.6L780 914.6L784.5 905.5L788.3 905.5" stroke="#151515" stroke-width="0.8" fill="none" />
<path d="M829.5 887.5L829.5 898" stroke="#151515" stroke-width="0.7" />
<path d="M841.5 889.6L841.5 909" stroke="#151515" stroke-width="0.7" />
<circle cx="737" cy="891.500" r=".7" fill="#111"/><circle cx="781" cy="890.500" r=".7" fill="#111"/>
<path d="M796 917C815 912 830 905 848 893.800" stroke="#151515" stroke-width="0.8" fill="none" />
<path d="M848 893.7L897 889.6L927.5 892L988.3 898L1050.4 898" stroke="#151515" stroke-width="0.9" fill="none" />
<path d="M848 893.700L897 889.600L927.500 892L988.300 898H864.400V893.700Z" stroke="#111" stroke-width="0.5" fill="#1a1a1a" />
<path d="M841.5 898.5L1050.4 898.5" stroke="#151515" stroke-width="1" />
<path d="M841.5 903.5L1050.4 903.5" stroke="#151515" stroke-width="1" />
<path d="M841.5 907.5L1050.4 907.5" stroke="#151515" stroke-width="1.3" />
<path d="M864.4 909.5L1048 909.5" stroke="#151515" stroke-width="0.7" />
<path d="M864.5 893L864.5 908" stroke="#151515" stroke-width="0.7" />
<path d="M896.5 893L896.5 908" stroke="#151515" stroke-width="0.7" />
<path d="M927.5 893L927.5 908" stroke="#151515" stroke-width="0.7" />
<path d="M958.5 898L958.5 908" stroke="#151515" stroke-width="0.7" />
<path d="M990.5 898L990.5 908" stroke="#151515" stroke-width="0.7" />
<path d="M1021.5 898L1021.5 908" stroke="#151515" stroke-width="0.7" />
<path d="M1050.5 898L1050.5 911" stroke="#151515" stroke-width="1" />
<circle cx="1049.500" cy="912" r="1.500" fill="none" stroke="#111" stroke-width=".6"/>
<path d="M575 922L590 922L614 901" stroke="#151515" stroke-width="0.8" fill="none" />
<path d="M648 938L660 938L686 918" stroke="#151515" stroke-width="0.8" fill="none" />
<path d="M714 937L724 937L742 917" stroke="#151515" stroke-width="0.8" fill="none" />
<path d="M888 929L896 929L918 909.5" stroke="#151515" stroke-width="0.8" fill="none" />
<path d="M543 902L543 916" stroke="#151515" stroke-width="0.8" fill="none" />
<circle cx="543" cy="902.300" r="1.200" fill="#111"/>
<text x="352" y="858.5" font-size="7.13" text-anchor="middle" class="n" >350</text>
<text x="342" y="858" font-size="7.13" text-anchor="middle" class="n" >+24.00</text>
<text x="329" y="869" font-size="7.13" text-anchor="middle" class="n" >1:3.5</text>
<text x="413" y="841" font-size="7.13" text-anchor="middle" class="n" >1:3.0</text>
<text x="445" y="825" font-size="7.13" text-anchor="middle" class="n" >+35.45</text>
<text x="467" y="822.5" font-size="7.13" text-anchor="middle" class="n" >+36.72</text>
<text x="538" y="824" font-size="7.13" text-anchor="middle" class="n" >+36.50</text>
<text x="546" y="842" font-size="7.13" text-anchor="middle" class="n" >+29.50</text>
<text x="471" y="855.5" font-size="7.13" text-anchor="middle" class="n" >+24.40</text>
<text x="403" y="873.5" font-size="7.13" text-anchor="middle" class="n" >+18.00</text>
<text x="471" y="909" font-size="7.13" text-anchor="middle" class="n" >+8.30</text>
<text x="552" y="918" font-size="7.13" text-anchor="middle" class="n" >+8.90</text>
<text x="663" y="855" font-size="7.13" text-anchor="middle" class="n" >+25.00</text>
<text x="652" y="879" font-size="7.13" text-anchor="middle" class="n" >+16.00</text>
<text x="587" y="887" font-size="7.13" text-anchor="middle" class="n" >+11.50</text>
<text x="713.5" y="884" font-size="7.13" text-anchor="middle" class="n" >+14.00</text>
<text x="844" y="884" font-size="7.13" text-anchor="middle" class="n" >+14.00</text>
<text x="874.5" y="887" font-size="7.13" text-anchor="middle" class="n" >+13.00</text>
<text x="1003" y="895" font-size="7.13" text-anchor="middle" class="n" >+10.00</text>
<text x="781" y="904" font-size="7.13" text-anchor="middle" class="n" >+6.70</text>
<text x="762" y="912" font-size="7.13" text-anchor="middle" class="n" >+3.50</text>
<text x="750" y="928" font-size="7.13" text-anchor="middle" class="n" >+1.40</text>
<text x="913" y="904" font-size="7.13" text-anchor="middle" class="n" >+9.50</text>
<text x="448" y="843.5" font-size="6.8" text-anchor="middle" class="s" >XIIIa</text>
<text x="423" y="851.5" font-size="6.8" text-anchor="middle" class="s" >XIIa</text>
<text x="448" y="851.5" font-size="6.8" text-anchor="middle" class="s" >Xa</text>
<text x="391" y="859.5" font-size="6.8" text-anchor="middle" class="s" >XIXa</text>
<text x="415" y="859.5" font-size="6.8" text-anchor="middle" class="s" >Xa</text>
<text x="448" y="859.5" font-size="6.8" text-anchor="middle" class="s" >XIXa</text>
<text x="358" y="867.5" font-size="6.8" text-anchor="middle" class="s" >XIXa</text>
<text x="388" y="867.5" font-size="6.8" text-anchor="middle" class="s" >VIIIa</text>
<text x="417" y="867.5" font-size="6.8" text-anchor="middle" class="s" >XIIa</text>
<text x="447" y="867.5" font-size="6.8" text-anchor="middle" class="s" >VIIIa</text>
<text x="329" y="876" font-size="6.8" text-anchor="middle" class="s" >VIIa</text>
<text x="352" y="876" font-size="6.8" text-anchor="middle" class="s" >VIIIa</text>
<text x="387" y="876" font-size="6.8" text-anchor="middle" class="s" >VIIa</text>
<text x="421" y="876" font-size="6.8" text-anchor="middle" class="s" >VIIIa</text>
<text x="444" y="876" font-size="6.8" text-anchor="middle" class="s" >VIIa</text>
<text x="348" y="889" font-size="6.8" text-anchor="middle" class="s" >IIa</text>
<text x="499" y="834.5" font-size="6.8" text-anchor="middle" class="s" >XXa</text>
<text x="491" y="842" font-size="6.8" text-anchor="middle" class="s" >XIXa</text>
<text x="496" y="849.5" font-size="6.8" text-anchor="middle" class="s" >XVIIIa</text>
<text x="508" y="856" font-size="6.8" text-anchor="middle" class="s" >XVIa</text>
<text x="510" y="864.5" font-size="6.8" text-anchor="middle" class="s" >XVa</text>
<text x="482" y="872" font-size="6.8" text-anchor="middle" class="s" >XIIIa</text>
<text x="496" y="881" font-size="6.8" text-anchor="middle" class="s" >XIIa</text>
<text x="495" y="889" font-size="6.8" text-anchor="middle" class="s" >Xa</text>
<text x="503" y="896.5" font-size="6.8" text-anchor="middle" class="s" >XIXa</text>
<text x="545" y="858.5" font-size="6.8" text-anchor="middle" class="s" >XIXa</text>
<text x="567" y="865" font-size="6.8" text-anchor="middle" class="s" >XVIIa</text>
<text x="563" y="872.5" font-size="6.8" text-anchor="middle" class="s" >XVIa</text>
<text x="563" y="880.5" font-size="6.8" text-anchor="middle" class="s" >XIVa</text>
<text x="557" y="888.5" font-size="6.8" text-anchor="middle" class="s" >XIa</text>
<text x="569" y="896.5" font-size="6.8" text-anchor="middle" class="s" >Xa</text>
<text x="624" y="865" font-size="6.8" text-anchor="middle" class="s" >XVIIIa</text>
<text x="638" y="872.5" font-size="6.8" text-anchor="middle" class="s" >XVa</text>
<text x="632" y="881" font-size="6.8" text-anchor="middle" class="s" >XIIIa</text>
<text x="638" y="896" font-size="6.8" text-anchor="middle" class="s" >XIXa</text>
<text x="674" y="888.5" font-size="6.8" text-anchor="middle" class="s" >XIIa</text>
<text x="685" y="903" font-size="6.8" text-anchor="middle" class="s" >Xa</text>
<text x="577" y="919.5" font-size="6.8" text-anchor="middle" class="s" >IIa</text>
<text x="657" y="936" font-size="6.8" text-anchor="middle" class="s" >IVa</text>
<text x="717" y="934" font-size="6.8" text-anchor="middle" class="s" >Va</text>
<text x="893" y="927" font-size="6.8" text-anchor="middle" class="s" >VIa</text>
<text x="753" y="892" font-size="6.8" text-anchor="middle" class="s" >XVa</text>
<text x="751" y="900" font-size="6.8" text-anchor="middle" class="s" >XIVa</text>
<text x="750" y="907" font-size="6.8" text-anchor="middle" class="s" >XIIIa</text>
<text x="747" y="916" font-size="6.8" text-anchor="middle" class="s" >XIaa</text>
<text x="812" y="892.5" font-size="6.8" text-anchor="middle" class="s" >XVIa</text>
<text x="808" y="899.5" font-size="6.8" text-anchor="middle" class="s" >XIIIa</text>
<text x="800" y="907" font-size="6.8" text-anchor="middle" class="s" >XIIa</text>
<text x="830" y="907" font-size="6.8" text-anchor="middle" class="s" >XIa</text>
<text x="830" y="916" font-size="6.8" text-anchor="middle" class="s" >Xa</text>
<text x="856" y="897.5" font-size="6.8" text-anchor="middle" class="s" >XIVa</text>
<text x="885" y="897.5" font-size="6.8" text-anchor="middle" class="s" >XIIIa</text>
<text x="908" y="897.5" font-size="6.8" text-anchor="middle" class="s" >XIIa</text>
<text x="855" y="905.5" font-size="6.8" text-anchor="middle" class="s" >XIIa</text>
<text x="879" y="906" font-size="6.8" text-anchor="middle" class="s" >Xa</text>
<text x="905" y="906" font-size="6.8" text-anchor="middle" class="s" >XIa</text>
<text x="947" y="905.5" font-size="6.8" text-anchor="middle" class="s" >Xa</text>
<text x="974" y="906" font-size="6.8" text-anchor="middle" class="s" >XIa</text>
<text x="1005" y="906" font-size="6.8" text-anchor="middle" class="s" >Xa</text>
<text x="1031" y="906" font-size="6.8" text-anchor="middle" class="s" >XIa</text>
<text x="526" y="847.5" font-size="6.8" text-anchor="middle" class="s" >XIXa</text>
<text x="1374.5" y="336.6" font-size="14.6" text-anchor="middle" class="s" textLength="134" lengthAdjust="spacingAndGlyphs">MẶT CẮT NGANG 1-1</text>
<text x="1375" y="348.5" font-size="8.6" text-anchor="middle" class="s" textLength="38">Tỷ lệ: 100</text>
<path d="M1117.4 425.5L1192.6 425.5" stroke="#151515" stroke-width="1" />
<path d="M1117.5 425.7L1117.5 518.3" stroke="#151515" stroke-width="1" />
<path d="M1114 457L1118 458L1117 459.5L1121 460" stroke="#151515" stroke-width="0.8" fill="none" />
<path d="M1145 421.8L1192.6 420.6" stroke="#151515" stroke-width="0.8" />
<path d="M1557.9 425.5L1634.7 425.5" stroke="#151515" stroke-width="1" />
<path d="M1634.5 425.8L1634.5 558" stroke="#151515" stroke-width="1" />
<path d="M1631 459L1635 460L1634 461.5L1638 462" stroke="#151515" stroke-width="0.8" fill="none" />
<path d="M1572 417.5L1606 421.5" stroke="#151515" stroke-width="0.8" />
<path d="M1117.4 518.5L1634.7 518.5" stroke="#151515" stroke-width="1" />
<path d="M1205.5 518.3L1205.5 538.2" stroke="#151515" stroke-width="1" />
<path d="M1546.5 518.3L1546.5 538.2" stroke="#151515" stroke-width="1" />
<path d="M1205.8 538.5L1546 538.5" stroke="#151515" stroke-width="1" />
<text x="1375.5" y="536.5" font-size="6.67" text-anchor="middle" class="n" >26000</text>
<rect x="1220.3" y="518.300" width="2.400" height="1.300" fill="#111"/>
<rect x="1281.8" y="518.300" width="2.400" height="1.300" fill="#111"/>
<rect x="1342.8" y="518.300" width="2.400" height="1.300" fill="#111"/>
<rect x="1403.8" y="518.300" width="2.400" height="1.300" fill="#111"/>
<rect x="1465.8" y="518.300" width="2.400" height="1.300" fill="#111"/>
<rect x="1529.8" y="518.300" width="2.400" height="1.300" fill="#111"/>
<rect x="1196" y="414.9" width="359" height="3.6" stroke="none" stroke-width="0" fill="#0a0a0a" />
<path d="M1196 420.5L1555 420.5" stroke="#151515" stroke-width="0.7" />
<path d="M1197 419.7L1554 419.7" stroke="#111" stroke-width="1.3" stroke-dasharray="3 1"/>
<path d="M1196 425.5L1555 425.5" stroke="#151515" stroke-width="1" />
<rect x="1196" y="420.6" width="9.5" height="5.1" stroke="#151515" stroke-width="0.8" fill="none" />
<rect x="1546" y="420.6" width="9.5" height="5.1" stroke="#151515" stroke-width="0.8" fill="none" />
<path d="M1196 409.5L1555 409.5" stroke="#151515" stroke-width="0.6" />
<path d="M1196.5 405.5L1196.5 414.9" stroke="#151515" stroke-width="0.6" />
<path d="M1205.5 405.5L1205.5 414.9" stroke="#151515" stroke-width="0.6" />
<path d="M1214.5 405.5L1214.5 414.9" stroke="#151515" stroke-width="0.6" />
<path d="M1236.5 405.5L1236.5 414.9" stroke="#151515" stroke-width="0.6" />
<path d="M1254.5 405.5L1254.5 414.9" stroke="#151515" stroke-width="0.6" />
<path d="M1275.5 405.5L1275.5 414.9" stroke="#151515" stroke-width="0.6" />
<path d="M1285.5 405.5L1285.5 414.9" stroke="#151515" stroke-width="0.6" />
<path d="M1294.5 405.5L1294.5 414.9" stroke="#151515" stroke-width="0.6" />
<path d="M1341.5 405.5L1341.5 414.9" stroke="#151515" stroke-width="0.6" />
<path d="M1352.5 405.5L1352.5 414.9" stroke="#151515" stroke-width="0.6" />
<path d="M1399.5 405.5L1399.5 414.9" stroke="#151515" stroke-width="0.6" />
<path d="M1409.5 405.5L1409.5 414.9" stroke="#151515" stroke-width="0.6" />
<path d="M1456.5 405.5L1456.5 414.9" stroke="#151515" stroke-width="0.6" />
<path d="M1467.5 405.5L1467.5 414.9" stroke="#151515" stroke-width="0.6" />
<path d="M1476.5 405.5L1476.5 414.9" stroke="#151515" stroke-width="0.6" />
<path d="M1497.5 405.5L1497.5 414.9" stroke="#151515" stroke-width="0.6" />
<path d="M1515.5 405.5L1515.5 414.9" stroke="#151515" stroke-width="0.6" />
<path d="M1536.5 405.5L1536.5 414.9" stroke="#151515" stroke-width="0.6" />
<path d="M1546.5 405.5L1546.5 414.9" stroke="#151515" stroke-width="0.6" />
<path d="M1555.5 405.5L1555.5 414.9" stroke="#151515" stroke-width="0.6" />
<text x="1200" y="408.3" font-size="6.325" text-anchor="middle" class="n" >920</text>
<text x="1210" y="408.3" font-size="6.325" text-anchor="middle" class="n" >460</text>
<text x="1225.7" y="408.3" font-size="6.325" text-anchor="middle" class="n" >1640</text>
<text x="1245.4" y="408.3" font-size="6.325" text-anchor="middle" class="n" >1360</text>
<text x="1264.8" y="408.3" font-size="6.325" text-anchor="middle" class="n" >1640</text>
<text x="1279.4" y="408.3" font-size="6.325" text-anchor="middle" class="n" >680</text>
<text x="1289.4" y="408.3" font-size="6.325" text-anchor="middle" class="n" >600</text>
<text x="1318" y="408.3" font-size="6.325" text-anchor="middle" class="n" >3600</text>
<text x="1345.8" y="408.3" font-size="6.325" text-anchor="middle" class="n" >600</text>
<text x="1375.5" y="408.3" font-size="6.325" text-anchor="middle" class="n" >3600</text>
<text x="1404.3" y="408.3" font-size="6.325" text-anchor="middle" class="n" >600</text>
<text x="1433.5" y="408.3" font-size="6.325" text-anchor="middle" class="n" >3600</text>
<text x="1461.7" y="408.3" font-size="6.325" text-anchor="middle" class="n" >600</text>
<text x="1471.4" y="408.3" font-size="6.325" text-anchor="middle" class="n" >680</text>
<text x="1487" y="408.3" font-size="6.325" text-anchor="middle" class="n" >1640</text>
<text x="1506.4" y="408.3" font-size="6.325" text-anchor="middle" class="n" >1360</text>
<text x="1525.8" y="408.3" font-size="6.325" text-anchor="middle" class="n" >1640</text>
<text x="1541.4" y="408.3" font-size="6.325" text-anchor="middle" class="n" >680</text>
<text x="1551" y="408.3" font-size="6.325" text-anchor="middle" class="n" >920</text>
<path d="M1203 430L1164.8 487L1164.8 518.3" stroke="#151515" stroke-width="0.9" fill="none" />
<path d="M1205 433.5L1167.2 489.5L1167.2 518.3" stroke="#151515" stroke-width="0.8" fill="none" />
<path d="M1196 421L1196 430L1205.8 430" stroke="#151515" stroke-width="0.8" fill="none" />
<path d="M1205.5 425.7L1205.5 518.3" stroke="#151515" stroke-width="1" />
<path d="M1285.5 421L1285.5 518.3" stroke="#151515" stroke-width="1" />
<path d="M1294.5 421L1294.5 518.3" stroke="#151515" stroke-width="1" />
<path d="M1200.5 436.5L1285.2 436.5" stroke="#151515" stroke-width="1" />
<path d="M1194 445.5L1285.2 445.5" stroke="#151515" stroke-width="1" />
<path d="M1188 454.5L1285.2 454.5" stroke="#151515" stroke-width="1" />
<path d="M1177.5 469.5L1285.2 469.5" stroke="#151515" stroke-width="1" />
<path d="M1166.5 486.5L1285.2 486.5" stroke="#151515" stroke-width="1" />
<path d="M1164.8 501.5L1285.2 501.5" stroke="#151515" stroke-width="1" />
<path d="M1285.2 454.5L1294.4 454.5" stroke="#151515" stroke-width="0.7" />
<path d="M1285.2 469.5L1294.4 469.5" stroke="#151515" stroke-width="0.7" />
<path d="M1285.2 486.5L1294.4 486.5" stroke="#151515" stroke-width="0.7" />
<path d="M1285.2 501.5L1294.4 501.5" stroke="#151515" stroke-width="0.7" />
<rect x="1341.9" y="428" width="10.4" height="59" stroke="#151515" stroke-width="0.8" fill="none" />
<path d="M1352.3 440.5L1341.9 440.5" stroke="#151515" stroke-width="0.6" />
<path d="M1352.3 450.5L1341.9 450.5" stroke="#151515" stroke-width="0.6" />
<path d="M1352.3 461.5L1341.9 461.5" stroke="#151515" stroke-width="0.6" />
<path d="M1352.3 470.5L1341.9 470.5" stroke="#151515" stroke-width="0.6" />
<path d="M1341.9 484.5L1294.4 484.5" stroke="#151515" stroke-width="1" />
<path d="M1548 430L1586.2 487L1586.2 518.3" stroke="#151515" stroke-width="0.9" fill="none" />
<path d="M1546 433.5L1583.8 489.5L1583.8 518.3" stroke="#151515" stroke-width="0.8" fill="none" />
<path d="M1555 421L1555 430L1545.2 430" stroke="#151515" stroke-width="0.8" fill="none" />
<path d="M1545.5 425.7L1545.5 518.3" stroke="#151515" stroke-width="1" />
<path d="M1465.5 421L1465.5 518.3" stroke="#151515" stroke-width="1" />
<path d="M1456.5 421L1456.5 518.3" stroke="#151515" stroke-width="1" />
<path d="M1550.5 436.5L1465.8 436.5" stroke="#151515" stroke-width="1" />
<path d="M1557 445.5L1465.8 445.5" stroke="#151515" stroke-width="1" />
<path d="M1563 454.5L1465.8 454.5" stroke="#151515" stroke-width="1" />
<path d="M1573.5 469.5L1465.8 469.5" stroke="#151515" stroke-width="1" />
<path d="M1584.5 486.5L1465.8 486.5" stroke="#151515" stroke-width="1" />
<path d="M1586.2 501.5L1465.8 501.5" stroke="#151515" stroke-width="1" />
<path d="M1465.8 454.5L1456.6 454.5" stroke="#151515" stroke-width="0.7" />
<path d="M1465.8 469.5L1456.6 469.5" stroke="#151515" stroke-width="0.7" />
<path d="M1465.8 486.5L1456.6 486.5" stroke="#151515" stroke-width="0.7" />
<path d="M1465.8 501.5L1456.6 501.5" stroke="#151515" stroke-width="0.7" />
<rect x="1398.7" y="428" width="10.4" height="59" stroke="#151515" stroke-width="0.8" fill="none" />
<path d="M1398.7 440.5L1409.1 440.5" stroke="#151515" stroke-width="0.6" />
<path d="M1398.7 450.5L1409.1 450.5" stroke="#151515" stroke-width="0.6" />
<path d="M1398.7 461.5L1409.1 461.5" stroke="#151515" stroke-width="0.6" />
<path d="M1398.7 470.5L1409.1 470.5" stroke="#151515" stroke-width="0.6" />
<path d="M1409.1 484.5L1456.6 484.5" stroke="#151515" stroke-width="1" />
<path d="M1294.4 487.5L1456.8 487.5" stroke="#151515" stroke-width="1" />
<path d="M1294.4 501.5L1456.8 501.5" stroke="#151515" stroke-width="0.7" />
<path d="M1359.5 487L1359.5 518.3" stroke="#151515" stroke-width="1" />
<path d="M1375.5 425.7L1375.5 513.7" stroke="#222" stroke-width="0.8" stroke-dasharray="7 2 2 2"/>
<path d="M1373.5 489L1373.5 513" stroke="#222" stroke-width="0.6" stroke-dasharray="5 2"/>
<rect x="1352.1" y="368" width="46.6" height="46.4" stroke="#666" stroke-width="0.8" fill="none" />
<rect x="1352.1" y="367.4" width="46.6" height="1.8" stroke="none" stroke-width="0" fill="#777" />
<rect x="1371.7" y="371.3" width="13.2" height="3.5" stroke="#222" stroke-width="0.8" fill="#fff" />
<path d="M1376.5 371.3L1376.5 374.8" stroke="#151515" stroke-width="0.7" />
<path d="M1380.5 371.3L1380.5 374.8" stroke="#151515" stroke-width="0.7" />
<rect x="1352.9" y="373.6" width="47.9" height="9.2" stroke="none" stroke-width="0" fill="#080808" />
<path d="M1361 376.4L1391 376.4" stroke="#ddd" stroke-width="1.1" stroke-dasharray="1 2.300"/>
<path d="M1360 381L1392.5 381" stroke="#fff" stroke-width="1.1" />
<path d="M1360 379L1392 379" stroke="#999" stroke-width="0.5" />
<rect x="1352.2" y="373.6" width="6.3" height="40.8" stroke="none" stroke-width="0" fill="#080808" />
<path d="M1354.3 386L1354.3 412" stroke="#bbb" stroke-width="0.7" stroke-dasharray="1.200 3"/>
<rect x="1392.8" y="382.8" width="2.8" height="31.6" stroke="none" stroke-width="0" fill="#080808" />
<rect x="1358.5" y="398.4" width="41" height="2.4" stroke="none" stroke-width="0" fill="#080808" />
<rect x="1359.9" y="388.3" width="2.5" height="8.4" stroke="none" stroke-width="0" fill="#111" />
<rect x="1389.6" y="388.3" width="2.3" height="8.4" stroke="none" stroke-width="0" fill="#111" />
<rect x="1360.5" y="401" width="1.4" height="2.4" stroke="none" stroke-width="0" fill="#111" />
<rect x="1390" y="401" width="1.4" height="2.4" stroke="none" stroke-width="0" fill="#111" />
<path d="M1375.8 382.8L1375.8 414.4" stroke="#555" stroke-width="0.9" />
<path d="M1360.500 414.400A4.900 6.800 0 0 1 1370.300 414.400Z" stroke="#111" stroke-width="0.6" fill="#2a2a2a" />
<path d="M1400 395.500Q1397.200 398.200 1400 401" stroke="#080808" stroke-width="1.4" fill="none" />
<path d="M1651 515L1654 515L1654 548" stroke="#151515" stroke-width="0.7" fill="none" />
<path d="M1644.4 526L1646.4 526L1646.4 550" stroke="#151515" stroke-width="0.7" fill="none" />
<path d="M1669.5 552.5L1669.5 686.5" stroke="#151515" stroke-width="1" />
<path d="M1667 588L1672.5 588" stroke="#151515" stroke-width="0.8" />
<text x="1590" y="388.5" font-size="4.6" text-anchor="middle" class="s" textLength="54" lengthAdjust="spacingAndGlyphs">+36.60 (giữa trụng chắn sóng)</text>
<text x="1596" y="399" font-size="4.6" text-anchor="middle" class="s" textLength="30" lengthAdjust="spacingAndGlyphs">Bê tông chắn đáy</text>
<text x="1596" y="404.8" font-size="4.6" text-anchor="middle" class="s" textLength="35" lengthAdjust="spacingAndGlyphs">(+4*k 33++35.60)</text>
<text x="1588" y="418" font-size="4.6" text-anchor="middle" class="s" textLength="31" lengthAdjust="spacingAndGlyphs">i=4% chắn đánh</text>
<text x="1189" y="416" font-size="6.9" text-anchor="middle" class="n" >+36.72</text>
<text x="1122" y="422" font-size="6.9" text-anchor="middle" class="n" >+35.60</text>
<text x="1568" y="416" font-size="6.9" text-anchor="middle" class="n" >+36.72</text>
<text x="1641" y="422" font-size="6.9" text-anchor="middle" class="n" >+35.60</text>
<text x="1218" y="433" font-size="6.9" text-anchor="middle" class="n" >+35.45</text>
<text x="1243.5" y="433" font-size="6.9" text-anchor="middle" class="n" >+33.40</text>
<text x="1279.4" y="433" font-size="6.9" text-anchor="middle" class="n" >+35.45</text>
<text x="1337" y="427" font-size="6.9" text-anchor="middle" class="n" >+34.40</text>
<text x="1479" y="433" font-size="6.9" text-anchor="middle" class="n" >+35.45</text>
<text x="1516" y="433" font-size="6.9" text-anchor="middle" class="n" >+33.40</text>
<text x="1540.4" y="433" font-size="6.9" text-anchor="middle" class="n" >+35.45</text>
<text x="1228" y="460.5" font-size="6.9" text-anchor="middle" class="n" >+30.25</text>
<text x="1531.7" y="460" font-size="6.9" text-anchor="middle" class="n" >+30.25</text>
<text x="1236" y="514.5" font-size="6.9" text-anchor="middle" class="n" >+18.0</text>
<text x="1515.5" y="514" font-size="6.9" text-anchor="middle" class="n" >+18.00</text>
<text x="1389" y="491" font-size="6.9" text-anchor="middle" class="n" >28.40</text>
<text x="1183.8" y="435" font-size="6.9" text-anchor="middle" class="s" >XIIIa</text>
<text x="1173.6" y="449" font-size="6.9" text-anchor="middle" class="s" >XIIIa</text>
<text x="1198.4" y="464.5" font-size="6.9" text-anchor="middle" class="s" >Xa</text>
<text x="1189" y="479" font-size="6.9" text-anchor="middle" class="s" >VIIIa</text>
<text x="1186" y="495" font-size="6.9" text-anchor="middle" class="s" >VIIa</text>
<text x="1190.3" y="512" font-size="6.9" text-anchor="middle" class="s" >VIIa</text>
<text x="1241.7" y="443.5" font-size="6.9" text-anchor="middle" class="s" >XVa</text>
<text x="1242.8" y="451" font-size="6.9" text-anchor="middle" class="s" >XIIa</text>
<text x="1245.4" y="465.5" font-size="6.9" text-anchor="middle" class="s" >XIa</text>
<text x="1248.6" y="480.3" font-size="6.9" text-anchor="middle" class="s" >VIIIa</text>
<text x="1252.8" y="495" font-size="6.9" text-anchor="middle" class="s" >VIIa</text>
<text x="1256" y="514.5" font-size="6.9" text-anchor="middle" class="s" >VIIa</text>
<text x="1307.9" y="432.4" font-size="6.9" text-anchor="middle" class="s" >XVIa</text>
<text x="1295" y="440.5" font-size="6.9" text-anchor="middle" class="s" >XIVa</text>
<text x="1295.6" y="450.4" font-size="6.9" text-anchor="middle" class="s" >XIIIa</text>
<text x="1365" y="431.2" font-size="6.9" text-anchor="middle" class="s" >XVIa</text>
<text x="1355.8" y="440" font-size="6.9" text-anchor="middle" class="s" >XIVa</text>
<text x="1353.5" y="453.2" font-size="6.9" text-anchor="middle" class="s" >XIIIa</text>
<text x="1350" y="463" font-size="6.9" text-anchor="middle" class="s" >Xa</text>
<text x="1354.2" y="483.3" font-size="6.9" text-anchor="middle" class="s" >XIXa</text>
<text x="1376" y="494.4" font-size="6.9" text-anchor="middle" class="s" >VIIIa</text>
<text x="1374.3" y="515.7" font-size="6.9" text-anchor="middle" class="s" >VIIa</text>
<text x="1429.6" y="430.4" font-size="6.9" text-anchor="middle" class="s" >XVIa</text>
<text x="1454.9" y="430.4" font-size="6.9" text-anchor="middle" class="s" >XVIa</text>
<text x="1410" y="441" font-size="6.9" text-anchor="middle" class="s" >XIVa</text>
<text x="1410" y="450.2" font-size="6.9" text-anchor="middle" class="s" >XIIIa</text>
<text x="1407.8" y="460.5" font-size="6.9" text-anchor="middle" class="s" >Xa</text>
<text x="1413.4" y="484.2" font-size="6.9" text-anchor="middle" class="s" >XIXa</text>
<text x="1459.7" y="440.5" font-size="6.9" text-anchor="middle" class="s" >XVa</text>
<text x="1455.8" y="451.6" font-size="6.9" text-anchor="middle" class="s" >XIIIa</text>
<text x="1516" y="442.4" font-size="6.9" text-anchor="middle" class="s" >XIVa</text>
<text x="1502.9" y="451.6" font-size="6.9" text-anchor="middle" class="s" >XIIa</text>
<text x="1486.6" y="462.2" font-size="6.9" text-anchor="middle" class="s" >XIa</text>
<text x="1488.3" y="481.9" font-size="6.9" text-anchor="middle" class="s" >VIIa</text>
<text x="1491.2" y="496.9" font-size="6.9" text-anchor="middle" class="s" >VIa</text>
<text x="1484.6" y="513" font-size="6.9" text-anchor="middle" class="s" >IIa</text>
<text x="1553" y="451.6" font-size="6.9" text-anchor="middle" class="s" >XIIIa</text>
<text x="1559.3" y="462.8" font-size="6.9" text-anchor="middle" class="s" >Xa</text>
<text x="1564.3" y="478.4" font-size="6.9" text-anchor="middle" class="s" >XIXa</text>
<text x="1561.2" y="495.5" font-size="6.9" text-anchor="middle" class="s" >VIIIa</text>
<text x="1562.8" y="513.4" font-size="6.9" text-anchor="middle" class="s" >VIIa</text>
<text x="1602.6" y="505" font-size="6.9" text-anchor="middle" class="s" >VIIa</text>
<path d="M1176.4 436.2L1203 440.8" stroke="#151515" stroke-width="0.7" />
<path d="M1166 448.9L1196 452.4" stroke="#151515" stroke-width="0.7" />
<text x="1355.5" y="583.6" font-size="14.6" text-anchor="middle" class="s" textLength="134" lengthAdjust="spacingAndGlyphs">MẶT CẮT NGANG 2-2</text>
<text x="1356" y="595.3" font-size="8.6" text-anchor="middle" class="s" textLength="45">Tỷ lệ: 1:100</text>
<path d="M1190.6 625.5L1539 625.5" stroke="#151515" stroke-width="1" />
<path d="M1190.5 625.6L1190.5 631" stroke="#151515" stroke-width="1" />
<path d="M1194.5 625.6L1194.5 631" stroke="#151515" stroke-width="1" />
<path d="M1535.5 625.6L1535.5 631" stroke="#151515" stroke-width="1" />
<path d="M1539.5 625.6L1539.5 631" stroke="#151515" stroke-width="1" />
<text x="1193" y="624" font-size="6.67" text-anchor="middle" class="n" >320</text>
<text x="1364.8" y="624" font-size="6.67" text-anchor="middle" class="n" >26000</text>
<text x="1537" y="624" font-size="6.67" text-anchor="middle" class="n" >320</text>
<path d="M1364.8 635L1364.8 735" stroke="#111" stroke-width="1" stroke-dasharray="8 2 2 2"/>
<path d="M1364.5 757L1364.5 760" stroke="#151515" stroke-width="1" />
<path d="M1360.8 636.500L1364.8 640L1368.8 636.500M1361.8 639L1367.8 639" stroke="#e8e800" stroke-width="1.300" fill="none"/>
<path d="M1194.5 703.7L1194.5 636.9L1190.6 636.9L1182.8 703.7" stroke="#151515" stroke-width="0.9" fill="none" />
<path d="M1194.5 703.700Q1194.5 707.500 1198.3 707.500" stroke="#151515" stroke-width="0.9" fill="none" />
<path d="M1194.5 660.5L1186.69 660.5" stroke="#151515" stroke-width="0.6" />
<path d="M1194.5 672.5L1185.64 672.5" stroke="#151515" stroke-width="0.6" />
<path d="M1194.5 684.5L1184.56 684.5" stroke="#151515" stroke-width="0.6" />
<path d="M1194.5 696.5L1183.48 696.5" stroke="#151515" stroke-width="0.6" />
<path d="M1187.8 660.3L1121.9 660.3L1121.9 703.7L1142.2 716L1181.3 706" stroke="#151515" stroke-width="0.9" fill="none" />
<path d="M1118.8 669.5L1122.8 670.5L1121.3 671.5L1125.3 672.5" stroke="#151515" stroke-width="0.8" fill="none" />
<path d="M1182.8 703.700Q1181.8 706.500 1174.8 707" stroke="#151515" stroke-width="1.6" fill="none" />
<path d="M1181.3 686.2L1171.6 686.2L1171.6 706.9" stroke="#151515" stroke-width="0.8" fill="none" />
<rect x="1181.1" y="685" width="2.400" height="3.600" fill="#111"/>
<path d="M1133.5 657L1136 660.300L1138.5 657" stroke="#111" stroke-width="1" fill="none"/>
<path d="M1153.5 657L1156 660.300L1158.5 657" stroke="#111" stroke-width="1" fill="none"/>
<path d="M1174.1 657L1176.6 660.300L1179.1 657" stroke="#111" stroke-width="1" fill="none"/>
<path d="M1146 660.3L1148.4 647.5L1152.8 647.5" stroke="#151515" stroke-width="0.7" fill="none" />
<path d="M1194.5 683.5L1364.8 683.5" stroke="#151515" stroke-width="1" />
<path d="M1194.5 695.5L1364.8 695.5" stroke="#151515" stroke-width="0.7" />
<path d="M1198.3 707.5L1364.8 707.5" stroke="#151515" stroke-width="1" />
<path d="M1251.5 683.9L1251.5 707.5" stroke="#151515" stroke-width="1" />
<path d="M1245.8 683.5L1256.8 683.5" stroke="#151515" stroke-width="1" />
<path d="M1269.5 707.5L1269.5 721.5" stroke="#151515" stroke-width="1" />
<path d="M1139.8 721.5L1364.8 721.5" stroke="#151515" stroke-width="1.2" />
<path d="M1139.8 734.5L1364.8 734.5" stroke="#151515" stroke-width="1" />
<path d="M1228.5 721.5L1228.5 734.5" stroke="#151515" stroke-width="1" />
<path d="M1312.5 721.5L1312.5 734.5" stroke="#151515" stroke-width="1" />
<path d="M1142.5 716L1142.5 734.5" stroke="#151515" stroke-width="1" />
<path d="M1139.5 721.5L1139.5 734.5" stroke="#151515" stroke-width="1" />
<path d="M1142.2 728.5L1194.5 728.5" stroke="#151515" stroke-width="0.6" />
<path d="M1181.5 721.5L1181.5 728.5" stroke="#151515" stroke-width="0.6" />
<path d="M1194.5 721.5L1194.5 728.5" stroke="#151515" stroke-width="0.6" />
<path d="M1170.5 714.7L1170.5 752.5" stroke="#151515" stroke-width="1" />
<path d="M1119.8 718.5L1128.8 718.5" stroke="#151515" stroke-width="0.7" fill="none" />
<path d="M1124.8 721L1128.8 719" stroke="#111" stroke-width="1.500"/>
<text x="1293.7" y="680" font-size="7.13" text-anchor="middle" class="n" >+16.00</text>
<text x="1272.8" y="703.5" font-size="7.13" text-anchor="middle" class="n" >+11.50</text>
<text x="1270.6" y="733.8" font-size="6.9" text-anchor="middle" class="n" >6400</text>
<text x="1338.7" y="732.5" font-size="6.9" text-anchor="middle" class="n" >2000/2</text>
<text x="1162.5" y="727.7" font-size="6.67" text-anchor="middle" class="n" >3000</text>
<text x="1188.3" y="727.7" font-size="6.67" text-anchor="middle" class="n" >1000</text>
<text x="1185.6" y="734.3" font-size="6.67" text-anchor="middle" class="n" >6600</text>
<text x="1141.4" y="734.3" font-size="6.67" text-anchor="middle" class="n" >200</text>
<text x="1159.8" y="680.5" font-size="6.9" text-anchor="middle" class="n" >K&gt;=0.95</text>
<text x="1153.8" y="674.5" font-size="4.6" text-anchor="middle" class="s" >đất đắp</text>
<text x="1158.8" y="649.3" font-size="4.6" text-anchor="middle" class="s" >tường đỡ</text>
<g transform="translate(1249.6 696) rotate(-90)"><text font-size="6.67" text-anchor="middle" class="n">1800</text></g>
<g transform="translate(1267.7 714.500) rotate(-90)"><text font-size="6.67" text-anchor="middle" class="n">1000</text></g>
<g transform="translate(1171.3 697) rotate(-90)"><text font-size="6.67" text-anchor="middle" class="n">1520</text></g>
<g transform="translate(1131.8 708) rotate(-45)"><text font-size="6.67" text-anchor="middle" class="n">1:1.0</text></g>
<path d="M1535.1 703.7L1535.1 636.9L1539 636.9L1546.8 703.7" stroke="#151515" stroke-width="0.9" fill="none" />
<path d="M1535.1 703.700Q1535.1 707.500 1531.3 707.500" stroke="#151515" stroke-width="0.9" fill="none" />
<path d="M1535.1 660.5L1542.91 660.5" stroke="#151515" stroke-width="0.6" />
<path d="M1535.1 672.5L1543.96 672.5" stroke="#151515" stroke-width="0.6" />
<path d="M1535.1 684.5L1545.04 684.5" stroke="#151515" stroke-width="0.6" />
<path d="M1535.1 696.5L1546.12 696.5" stroke="#151515" stroke-width="0.6" />
<path d="M1541.8 660.3L1607.7 660.3L1607.7 703.7L1587.4 716L1548.3 706" stroke="#151515" stroke-width="0.9" fill="none" />
<path d="M1610.8 669.5L1606.8 670.5L1608.3 671.5L1604.3 672.5" stroke="#151515" stroke-width="0.8" fill="none" />
<path d="M1546.8 703.700Q1547.8 706.500 1554.8 707" stroke="#151515" stroke-width="1.6" fill="none" />
<path d="M1548.3 686.2L1558 686.2L1558 706.9" stroke="#151515" stroke-width="0.8" fill="none" />
<rect x="1546.1" y="685" width="2.400" height="3.600" fill="#111"/>
<path d="M1591.1 657L1593.6 660.300L1596.1 657" stroke="#111" stroke-width="1" fill="none"/>
<path d="M1571.1 657L1573.6 660.300L1576.1 657" stroke="#111" stroke-width="1" fill="none"/>
<path d="M1550.5 657L1553 660.300L1555.5 657" stroke="#111" stroke-width="1" fill="none"/>
<path d="M1583.6 660.3L1581.2 647.5L1576.8 647.5" stroke="#151515" stroke-width="0.7" fill="none" />
<path d="M1535.1 683.5L1364.8 683.5" stroke="#151515" stroke-width="1" />
<path d="M1535.1 695.5L1364.8 695.5" stroke="#151515" stroke-width="0.7" />
<path d="M1531.3 707.5L1364.8 707.5" stroke="#151515" stroke-width="1" />
<path d="M1478.5 683.9L1478.5 707.5" stroke="#151515" stroke-width="1" />
<path d="M1483.8 683.5L1472.8 683.5" stroke="#151515" stroke-width="1" />
<path d="M1460.5 707.5L1460.5 721.5" stroke="#151515" stroke-width="1" />
<path d="M1589.8 721.5L1364.8 721.5" stroke="#151515" stroke-width="1.2" />
<path d="M1589.8 734.5L1364.8 734.5" stroke="#151515" stroke-width="1" />
<path d="M1501.5 721.5L1501.5 734.5" stroke="#151515" stroke-width="1" />
<path d="M1417.5 721.5L1417.5 734.5" stroke="#151515" stroke-width="1" />
<path d="M1587.5 716L1587.5 734.5" stroke="#151515" stroke-width="1" />
<path d="M1589.5 721.5L1589.5 734.5" stroke="#151515" stroke-width="1" />
<path d="M1587.4 728.5L1535.1 728.5" stroke="#151515" stroke-width="0.6" />
<path d="M1548.5 721.5L1548.5 728.5" stroke="#151515" stroke-width="0.6" />
<path d="M1535.5 721.5L1535.5 728.5" stroke="#151515" stroke-width="0.6" />
<path d="M1559.5 714.7L1559.5 752.5" stroke="#151515" stroke-width="1" />
<path d="M1609.8 718.5L1600.8 718.5" stroke="#151515" stroke-width="0.7" fill="none" />
<path d="M1600.8 721L1604.8 719" stroke="#111" stroke-width="1.500"/>
<text x="1435.9" y="680" font-size="7.13" text-anchor="middle" class="n" >+16.00</text>
<text x="1456.8" y="703.5" font-size="7.13" text-anchor="middle" class="n" >+11.50</text>
<text x="1459" y="733.8" font-size="6.9" text-anchor="middle" class="n" >6400</text>
<text x="1390.9" y="732.5" font-size="6.9" text-anchor="middle" class="n" >2000/2</text>
<text x="1567.1" y="727.7" font-size="6.67" text-anchor="middle" class="n" >3000</text>
<text x="1541.3" y="727.7" font-size="6.67" text-anchor="middle" class="n" >1000</text>
<text x="1544" y="734.3" font-size="6.67" text-anchor="middle" class="n" >6600</text>
<text x="1588.2" y="734.3" font-size="6.67" text-anchor="middle" class="n" >200</text>
<text x="1569.8" y="680.5" font-size="6.9" text-anchor="middle" class="n" >K&gt;=0.95</text>
<text x="1575.8" y="674.5" font-size="4.6" text-anchor="middle" class="s" >đất đắp</text>
<text x="1570.8" y="649.3" font-size="4.6" text-anchor="middle" class="s" >tường đỡ</text>
<g transform="translate(1476.8 696) rotate(-90)"><text font-size="6.67" text-anchor="middle" class="n">1800</text></g>
<g transform="translate(1458.7 714.500) rotate(-90)"><text font-size="6.67" text-anchor="middle" class="n">1000</text></g>
<g transform="translate(1558.1 697) rotate(-90)"><text font-size="6.67" text-anchor="middle" class="n">1520</text></g>
<g transform="translate(1597.8 708) rotate(-45)"><text font-size="6.67" text-anchor="middle" class="n">1:1.0</text></g>
<path d="M1524.5 636.9L1524.5 707.2" stroke="#151515" stroke-width="1" />
<path d="M1524.5 636.5L1535.1 636.5" stroke="#151515" stroke-width="1" />
<g transform="translate(1522.800 671) rotate(-90)"><text font-size="6.67" text-anchor="middle" class="n">5400</text></g>
<text x="1123.4" y="718" font-size="7.13" text-anchor="middle" class="n" >+8.90</text>
<text x="1606.6" y="718" font-size="7.13" text-anchor="middle" class="n" >+8.90</text>
<text x="1544.8" y="633.5" font-size="7.13" text-anchor="middle" class="n" >+25.00</text>
<text x="1196" y="653" font-size="6.4" text-anchor="middle" class="s" >XIXa</text>
<text x="1196" y="676.4" font-size="6.4" text-anchor="middle" class="s" >XIXa</text>
<text x="1544" y="653" font-size="6.4" text-anchor="middle" class="s" >XIIIa</text>
<text x="1542.5" y="671.8" font-size="6.4" text-anchor="middle" class="s" >XIXa</text>
<text x="1336.7" y="693" font-size="6.4" text-anchor="middle" class="s" >XIXa</text>
<text x="1334.4" y="703.9" font-size="6.4" text-anchor="middle" class="s" >Xa</text>
<text x="1334.4" y="717.5" font-size="6.4" text-anchor="middle" class="s" >IIa</text>
<text x="1173" y="748.5" font-size="6.67" text-anchor="start" class="n" >BTCT M300</text>
<text x="1173" y="753.7" font-size="6.67" text-anchor="start" class="n" >BT M100 - 10cm</text>
<text x="1557" y="748.5" font-size="6.67" text-anchor="end" class="n" >BTCT M300</text>
<text x="1557" y="753.7" font-size="6.67" text-anchor="end" class="n" >BT M100 - 10cm</text>
<text x="1377" y="795.2" font-size="14.6" text-anchor="middle" class="s" textLength="134" lengthAdjust="spacingAndGlyphs">MẶT CẮT NGANG 3-3</text>
<text x="1378" y="806.5" font-size="8.6" text-anchor="middle" class="s" textLength="46">Tỷ lệ: 1:100</text>
<path d="M1206.6 840.5L1552.4 840.5" stroke="#151515" stroke-width="1" />
<path d="M1206.5 840.3L1206.5 846.6" stroke="#151515" stroke-width="1" />
<path d="M1210.5 840.3L1210.5 846.6" stroke="#151515" stroke-width="1" />
<path d="M1552.5 840.3L1552.5 846.6" stroke="#151515" stroke-width="1" />
<path d="M1548.5 840.3L1548.5 846.6" stroke="#151515" stroke-width="1" />
<text x="1208" y="838.8" font-size="6.67" text-anchor="middle" class="n" >240</text>
<text x="1551" y="838.8" font-size="6.67" text-anchor="middle" class="n" >240</text>
<text x="1294" y="837.8" font-size="6.9" text-anchor="middle" class="n" >6500/2</text>
<text x="1465" y="837.8" font-size="6.9" text-anchor="middle" class="n" >6500/2</text>
<path d="M1379.5 834L1379.5 926.2" stroke="#111" stroke-width="1" stroke-dasharray="8 2 2 2"/>
<path d="M1375.5 833.500L1379.5 837L1383.5 833.500M1376.5 836L1382.5 836" stroke="#e8e800" stroke-width="1.300" fill="none"/>
<path d="M1206.6 846.6L1222.2 846.6L1222.2 901.2" stroke="#151515" stroke-width="0.8" fill="none" />
<path d="M1210.5 846.6L1210.5 898" stroke="#151515" stroke-width="0.9" fill="none" />
<path d="M1206.6 846.600L1201 895Q1200 900 1195.5 901.200L1170.6 906.400" stroke="#151515" stroke-width="0.9" fill="none" />
<path d="M1198.5 900.500L1194.5 898.500" stroke="#151515" stroke-width="1.8" fill="none" />
<path d="M1210.5 858.5L1205.19 858.5" stroke="#151515" stroke-width="0.6" />
<path d="M1210.5 866.5L1204.27 866.5" stroke="#151515" stroke-width="0.6" />
<path d="M1210.5 874.5L1203.35 874.5" stroke="#151515" stroke-width="0.6" />
<path d="M1210.5 882.5L1202.43 882.5" stroke="#151515" stroke-width="0.6" />
<path d="M1210.5 890.5L1201.51 890.5" stroke="#151515" stroke-width="0.6" />
<path d="M1203.5 851.5L1151 851.5" stroke="#151515" stroke-width="1" />
<path d="M1155 848.400L1157.5 851.700L1160 848.400" stroke="#111" stroke-width="1" fill="none"/>
<path d="M1193 848.400L1195.5 851.700L1198 848.400" stroke="#111" stroke-width="1" fill="none"/>
<path d="M1210.5 901.5L1379.5 901.5" stroke="#151515" stroke-width="1" />
<path d="M1223.8 905.5L1379.5 905.5" stroke="#151515" stroke-width="1.5" />
<path d="M1210.5 901.200Q1216.5 901.200 1218.5 905.500L1222.2 912.200" stroke="#151515" stroke-width="0.8" fill="none" />
<rect x="1227.7" y="901.2" width="6.3" height="11" stroke="#151515" stroke-width="0.7" fill="none" />
<path d="M1168.3 926.5L1379.5 926.5" stroke="#151515" stroke-width="1" />
<path d="M1168.3 912.5L1223 912.5" stroke="#151515" stroke-width="1" />
<path d="M1170.6 920.5L1223 920.5" stroke="#151515" stroke-width="0.6" />
<path d="M1168.5 909L1168.5 926.2" stroke="#151515" stroke-width="1" />
<path d="M1170.5 906.4L1170.5 926.2" stroke="#151515" stroke-width="1" />
<path d="M1223.5 905.6L1223.5 926.2" stroke="#151515" stroke-width="1.2" />
<path d="M1256.5 905.6L1256.5 926.2" stroke="#151515" stroke-width="1.1" />
<path d="M1318.5 905.6L1318.5 926.2" stroke="#151515" stroke-width="1.1" />
<path d="M1191.5 907.5L1191.5 936.9" stroke="#151515" stroke-width="1" />
<path d="M1199.5 912.2L1199.5 920.3" stroke="#151515" stroke-width="0.6" />
<path d="M1206.5 912.2L1206.5 920.3" stroke="#151515" stroke-width="0.6" />
<path d="M1151 895L1168.3 912.2" stroke="#151515" stroke-width="0.8" />
<circle cx="1215" cy="901" r="3" fill="none" stroke="#111" stroke-width=".8"/>
<text x="1169" y="925.6" font-size="6.67" text-anchor="middle" class="n" >200</text>
<text x="1197.2" y="925.6" font-size="6.67" text-anchor="middle" class="n" >4000</text>
<text x="1240" y="925.6" font-size="6.67" text-anchor="middle" class="n" >2560</text>
<text x="1287.8" y="925.6" font-size="6.67" text-anchor="middle" class="n" >4720</text>
<text x="1349.5" y="925.6" font-size="6.67" text-anchor="middle" class="n" >4720</text>
<text x="1185.5" y="920" font-size="6.44" text-anchor="middle" class="n" >2280</text>
<text x="1203.4" y="920" font-size="6.44" text-anchor="middle" class="n" >220</text>
<text x="1215" y="920" font-size="6.44" text-anchor="middle" class="n" >1000</text>
<text x="1179.2" y="877.5" font-size="6.9" text-anchor="middle" class="n" >K&gt;=0.95</text>
<text x="1174.5" y="871.2" font-size="4.6" text-anchor="middle" class="s" >đất đắp</text>
<text x="1337.8" y="898" font-size="7.13" text-anchor="middle" class="n" >+3.50</text>
<g transform="translate(1219.1 872.300) rotate(-90)"><text font-size="6.67" text-anchor="middle" class="n">4200</text></g>
<g transform="translate(1233.4 908.600) rotate(-90)"><text font-size="6.21" text-anchor="middle" class="n">800</text></g>
<g transform="translate(1161.5 905) rotate(45)"><text font-size="6.67" text-anchor="middle" class="n">1:1.0</text></g>
<path d="M1552.4 846.6L1536.8 846.6L1536.8 901.2" stroke="#151515" stroke-width="0.8" fill="none" />
<path d="M1548.5 846.6L1548.5 898" stroke="#151515" stroke-width="0.9" fill="none" />
<path d="M1552.4 846.600L1558 895Q1559 900 1563.5 901.200L1588.4 906.400" stroke="#151515" stroke-width="0.9" fill="none" />
<path d="M1560.5 900.500L1564.5 898.500" stroke="#151515" stroke-width="1.8" fill="none" />
<path d="M1548.5 858.5L1553.81 858.5" stroke="#151515" stroke-width="0.6" />
<path d="M1548.5 866.5L1554.73 866.5" stroke="#151515" stroke-width="0.6" />
<path d="M1548.5 874.5L1555.65 874.5" stroke="#151515" stroke-width="0.6" />
<path d="M1548.5 882.5L1556.57 882.5" stroke="#151515" stroke-width="0.6" />
<path d="M1548.5 890.5L1557.49 890.5" stroke="#151515" stroke-width="0.6" />
<path d="M1555.5 851.5L1608 851.5" stroke="#151515" stroke-width="1" />
<path d="M1599 848.400L1601.5 851.700L1604 848.400" stroke="#111" stroke-width="1" fill="none"/>
<path d="M1561 848.400L1563.5 851.700L1566 848.400" stroke="#111" stroke-width="1" fill="none"/>
<path d="M1548.5 901.5L1379.5 901.5" stroke="#151515" stroke-width="1" />
<path d="M1535.2 905.5L1379.5 905.5" stroke="#151515" stroke-width="1.5" />
<path d="M1548.5 901.200Q1542.5 901.200 1540.5 905.500L1536.8 912.200" stroke="#151515" stroke-width="0.8" fill="none" />
<rect x="1525" y="901.2" width="6.3" height="11" stroke="#151515" stroke-width="0.7" fill="none" />
<path d="M1590.7 926.5L1379.5 926.5" stroke="#151515" stroke-width="1" />
<path d="M1590.7 912.5L1536 912.5" stroke="#151515" stroke-width="1" />
<path d="M1588.4 920.5L1536 920.5" stroke="#151515" stroke-width="0.6" />
<path d="M1590.5 909L1590.5 926.2" stroke="#151515" stroke-width="1" />
<path d="M1588.5 906.4L1588.5 926.2" stroke="#151515" stroke-width="1" />
<path d="M1536.5 905.6L1536.5 926.2" stroke="#151515" stroke-width="1.2" />
<path d="M1502.5 905.6L1502.5 926.2" stroke="#151515" stroke-width="1.1" />
<path d="M1440.5 905.6L1440.5 926.2" stroke="#151515" stroke-width="1.1" />
<path d="M1567.5 907.5L1567.5 936.9" stroke="#151515" stroke-width="1" />
<path d="M1559.5 912.2L1559.5 920.3" stroke="#151515" stroke-width="0.6" />
<path d="M1553.5 912.2L1553.5 920.3" stroke="#151515" stroke-width="0.6" />
<path d="M1608 895L1590.7 912.2" stroke="#151515" stroke-width="0.8" />
<circle cx="1544" cy="901" r="3" fill="none" stroke="#111" stroke-width=".8"/>
<text x="1590" y="925.6" font-size="6.67" text-anchor="middle" class="n" >200</text>
<text x="1561.8" y="925.6" font-size="6.67" text-anchor="middle" class="n" >4000</text>
<text x="1519" y="925.6" font-size="6.67" text-anchor="middle" class="n" >2560</text>
<text x="1471.2" y="925.6" font-size="6.67" text-anchor="middle" class="n" >4720</text>
<text x="1409.5" y="925.6" font-size="6.67" text-anchor="middle" class="n" >4720</text>
<text x="1573.5" y="920" font-size="6.44" text-anchor="middle" class="n" >2280</text>
<text x="1555.6" y="920" font-size="6.44" text-anchor="middle" class="n" >220</text>
<text x="1544" y="920" font-size="6.44" text-anchor="middle" class="n" >1000</text>
<text x="1579.8" y="877.5" font-size="6.9" text-anchor="middle" class="n" >K&gt;=0.95</text>
<text x="1584.5" y="871.2" font-size="4.6" text-anchor="middle" class="s" >đất đắp</text>
<text x="1421.2" y="898" font-size="7.13" text-anchor="middle" class="n" >+3.50</text>
<g transform="translate(1541.7 872.300) rotate(-90)"><text font-size="6.67" text-anchor="middle" class="n">4200</text></g>
<g transform="translate(1529.2 908.600) rotate(-90)"><text font-size="6.21" text-anchor="middle" class="n">800</text></g>
<g transform="translate(1597.5 905) rotate(-45)"><text font-size="6.67" text-anchor="middle" class="n">1:1.0</text></g>
<text x="1175.3" y="847.5" font-size="7.13" text-anchor="middle" class="n" >+13.00</text>
<text x="1564" y="842.5" font-size="7.13" text-anchor="middle" class="n" >+14.00</text>
<text x="1584" y="847.5" font-size="7.13" text-anchor="middle" class="n" >+13.00</text>
<text x="1211.5" y="858.7" font-size="6.9" text-anchor="middle" class="s" >XVa</text>
<text x="1205.8" y="876.7" font-size="6.9" text-anchor="middle" class="s" >XIVa</text>
<text x="1205.8" y="890.7" font-size="6.9" text-anchor="middle" class="s" >XIIIa</text>
<text x="1208" y="908.7" font-size="6.9" text-anchor="middle" class="s" >XIa</text>
<text x="1547.7" y="857.7" font-size="6.9" text-anchor="middle" class="s" >XVa</text>
<text x="1554" y="876.7" font-size="6.9" text-anchor="middle" class="s" >XIVa</text>
<text x="1551" y="890.7" font-size="6.9" text-anchor="middle" class="s" >XIIIa</text>
<text x="1554" y="907" font-size="6.9" text-anchor="middle" class="s" >XIa</text>
<text x="1361" y="903.6" font-size="6.9" text-anchor="middle" class="s" >Va</text>
<text x="1246.4" y="920" font-size="6.9" text-anchor="middle" class="s" >IIa</text>
<path d="M1251 918L1266 906.4" stroke="#151515" stroke-width="0.8" />
<text x="1194" y="933" font-size="6.67" text-anchor="start" class="n" >BTCT M300</text>
<text x="1194" y="938.2" font-size="6.67" text-anchor="start" class="n" >BT M100 - 10cm</text>
<text x="1565" y="933" font-size="6.67" text-anchor="end" class="n" >BTCT M300</text>
<text x="1565" y="938.2" font-size="6.67" text-anchor="end" class="n" >BT M100 - 10cm</text>
</svg>
<!-- ===== Zoom bottom toolbar ===== -->
<div class="abs" style="left:0;top:940px;width:1920px;height:80px;background:#1a1a1a"></div>
<svg class="abs" style="left:50px;top:947px" width="40" height="38" viewBox="0 0 40 38"><rect x="14" y="2.500" width="11" height="20" rx="5.500" fill="#a9a9a9"/><path d="M9 17 A10.500 10.500 0 0 0 30 17" stroke="#a9a9a9" stroke-width="2" fill="none"/><path d="M19.500 27.500 V33.500 M14 34 H25" stroke="#a9a9a9" stroke-width="2"/><path d="M2.500 35 L36 2" stroke="#f0504d" stroke-width="2"/></svg>
<div class="zbtn" style="left:35.500px;top:994px;letter-spacing:.25px">Unmute</div>
<svg class="abs" style="left:110px;top:961px" width="14" height="9" viewBox="0 0 14 9"><path d="M1.500 7.500 L7 2 L12.500 7.500" stroke="#c6c6c6" stroke-width="2" fill="none"/></svg>
<svg class="abs" style="left:189px;top:954px" width="38" height="23" viewBox="0 0 38 23"><rect x="1" y="1" width="25" height="21" rx="5" fill="#aeaeae"/><path d="M28 9 L35 3.500 Q37 2.500 37 4.500 V18.500 Q37 20.500 35 19.500 L28 14Z" fill="#aeaeae"/></svg>
<div class="zbtn" style="left:162.500px;top:994px;letter-spacing:.02px">Stop Video</div>
<svg class="abs" style="left:257px;top:961px" width="14" height="9" viewBox="0 0 14 9"><path d="M1.500 7.500 L7 2 L12.500 7.500" stroke="#c6c6c6" stroke-width="2" fill="none"/></svg>
<svg class="abs" style="left:753px;top:952px" width="38" height="29" viewBox="0 0 38 29"><g fill="#aeaeae"><circle cx="25.500" cy="9" r="5.500"/><path d="M17 28 Q17 17 25.500 17 Q37 17 37 24 Q37 28 33 28Z"/><circle cx="11.500" cy="7.500" r="6.500" stroke="#1a1a1a" stroke-width="1.500"/><path d="M1 28 Q0 24 2 20.500 Q5 16 11.500 16 Q18 16 21 20.500 Q23 24 22 28Z" stroke="#1a1a1a" stroke-width="1.500"/></g></svg>
<div class="zbtn" style="left:796.500px;top:956px;font-size:17px;font-weight:normal;color:#d0d0d0">9</div>
<div class="zbtn" style="left:723px;top:994px;letter-spacing:-.22px">Participants</div>
<svg class="abs" style="left:845px;top:961px" width="14" height="9" viewBox="0 0 14 9"><path d="M1.500 7.500 L7 2 L12.500 7.500" stroke="#c6c6c6" stroke-width="2" fill="none"/></svg>
<svg class="abs" style="left:913px;top:951px" width="33" height="29" viewBox="0 0 33 29"><path d="M6 1 H27 Q32 1 32 6 V15 Q32 20 27 20 H16 L8 28 V20 H6 Q1 20 1 15 V6 Q1 1 6 1Z" fill="#aeaeae"/></svg>
<div class="zbtn" style="left:911px;top:994px;letter-spacing:-.7px">Chat</div>
<svg class="abs" style="left:1044px;top:952px" width="38" height="28" viewBox="0 0 38 28"><rect x="1" y="0.500" width="36" height="27" rx="4" fill="#23d959"/><path d="M19 21 V8.500 M13.500 13 L19 7.500 L24.500 13" stroke="#1a1a1a" stroke-width="2.600" fill="none"/></svg>
<div class="zbtn" style="left:1010px;top:994px;color:#23d959;letter-spacing:-.4px">Share Screen</div>
<svg class="abs" style="left:1180px;top:949px" width="34" height="34" viewBox="0 0 34 34"><circle cx="17" cy="17" r="14.500" stroke="#aeaeae" stroke-width="2" fill="none"/><circle cx="17" cy="17" r="10.500" fill="#aeaeae"/></svg>
<div class="zbtn" style="left:1168px;top:994px;letter-spacing:-.47px">Record</div>
<svg class="abs" style="left:1300px;top:946px" width="36" height="36" viewBox="0 0 36 36"><path d="M24 8.500 A13 13 0 1 0 29.500 14 L24 14Z" fill="#aeaeae"/><circle cx="12.500" cy="18.500" r="1.700" fill="#1a1a1a"/><circle cx="20.500" cy="18.500" r="1.700" fill="#1a1a1a"/><path d="M10.500 23.500 Q16.500 29.500 22.500 23.500" stroke="#1a1a1a" stroke-width="1.800" fill="none"/><path d="M28.500 2.500 V12.500 M23.500 7.500 H33.500" stroke="#aeaeae" stroke-width="2"/></svg>
<div class="zbtn" style="left:1277px;top:994px;letter-spacing:-.4px">Reactions</div>
<div class="abs" style="left:1810px;top:960px;width:91px;height:40px;background:#c62828;border-radius:9px"></div>
<div class="zbtn" style="left:1831px;top:972px;color:#fff;font-size:17px;letter-spacing:.16px">Leave</div>
<!-- ===== Windows taskbar ===== -->
<div id="taskbar" class="abs"></div>
<svg class="abs" style="left:24px;top:1038px" width="25" height="25" viewBox="0 0 25 25"><g fill="#fff"><path d="M0 3.500 L10.500 2 V11.800 H0Z"/><path d="M11.800 1.800 L25 0 V11.800 H11.800Z"/><path d="M0 13 H10.500 V22.800 L0 21.300Z"/><path d="M11.800 13 H25 V25 L11.800 23Z"/></g></svg>
<div class="abs" style="left:72px;top:1020px;width:516px;height:60px;background:#f2f2f2;box-sizing:border-box;border:1px solid #cfd4d6;border-bottom:none"></div>
<svg class="abs" style="left:90px;top:1036px" width="26" height="28" viewBox="0 0 26 28"><circle cx="16" cy="10" r="7.500" stroke="#1b1b1b" stroke-width="1.800" fill="none"/><path d="M10.500 15.500 L1 26" stroke="#1b1b1b" stroke-width="1.800"/></svg>
<div class="t" style="left:132px;top:1040.500px;font-size:23px;color:#222;letter-spacing:-.34px">Type here to search</div>
<svg class="abs" style="left:610px;top:1036px" width="28" height="28" viewBox="0 0 28 28"><circle cx="14" cy="14" r="10" stroke="#fff" stroke-width="3" fill="none"/></svg>
<svg class="abs" style="left:682px;top:1036px" width="28" height="26" viewBox="0 0 28 26"><g stroke="#fff" stroke-width="1.400" fill="none"><rect x="2.200" y="8.400" width="15.600" height="10.600"/><path d="M2.200 5.500 V3.500 H17.800 V5.500 M2.200 21.700 V23.700 H17.800 V21.700"/><path d="M24.500 2 V24.600"/></g><rect x="23" y="9" width="3" height="3" fill="#fff"/></svg>
<!-- edge -->
<svg class="abs" style="left:754px;top:1031px" width="38" height="38" viewBox="0 0 38 38"><defs><linearGradient id="edg1" x1="0" y1="0" x2=".8" y2="1"><stop offset="0" stop-color="#2aa8e8"/><stop offset="1" stop-color="#0b4f9e"/></linearGradient><linearGradient id="edg2" x1="0" y1=".3" x2="1" y2=".4"><stop offset="0" stop-color="#2db5e6"/><stop offset=".55" stop-color="#35c8b8"/><stop offset="1" stop-color="#62d84e"/></linearGradient></defs><circle cx="19.500" cy="19" r="18" fill="url(#edg1)"/><path d="M1.600 17 C3 6 12 .8 20 1 C31 1.300 37.500 9.500 37.500 17.500 C37.500 23 33.500 26.500 28.500 26.500 C24.500 26.500 22 25 22.500 22.500 C24 19.500 22.500 14.500 17 13.200 C10.500 11.800 4 14.500 1.600 17Z" fill="url(#edg2)"/><path d="M22.500 22.500 C22 25 24.500 26.500 28.500 26.500 C32 26.500 35 25 36.500 22 C36.800 24 36 27.500 33.500 30.500 C29 32.500 23 31 20.500 27.500 C19.500 25.500 20.500 23.500 22.500 22.500Z" fill="#25383f"/><path d="M12.500 20 C12.500 28 19 34.500 28.500 33.500 C22.500 38.500 8.500 37 4 27 C1.500 20.500 5.500 14.500 11.500 13.500 C10 15.500 12.500 17 12.500 20Z" fill="#1469c4"/></svg>
<!-- explorer -->
<svg class="abs" style="left:831px;top:1034px" width="35" height="30" viewBox="0 0 35 30"><path d="M1 3 Q1 1 3 1 H12 L15 4 H32 Q34 4 34 6 V27 Q34 29 32 29 H3 Q1 29 1 27Z" fill="#f5b92d"/><path d="M1 9 H34 V27 Q34 29 32 29 H3 Q1 29 1 27Z" fill="#fbd768"/><path d="M9 29 V18 H26 V29 H22 V22 H13 V29Z" fill="#3b8fd6"/></svg>
<!-- mail -->
<svg class="abs" style="left:904px;top:1031px" width="38" height="36" viewBox="0 0 38 36"><path d="M1 13 L19 1 L37 13Z" fill="#1b72c8"/><path d="M5 10 H33 V24 H5Z" fill="#f4f6f8"/><path d="M1 13 L19 25 L37 13 V34 H1Z" fill="#2fa4e7"/><path d="M1 34 L37 13 V34Z" fill="#35c0f0"/></svg>
<!-- teams -->
<svg class="abs" style="left:979px;top:1032px" width="40" height="36" viewBox="0 0 40 36"><circle cx="29" cy="8" r="4.500" fill="#6b74cc"/><circle cx="19" cy="6" r="5.500" fill="#6b74cc"/><path d="M24 13 H36 Q37.500 13 37.500 14.500 V22 Q37.500 28 31 28 Q26 28 24 24Z" fill="#5059c9"/><path d="M10 13 H27 Q28.500 13 28.500 14.500 V24 Q28.500 32 19.500 32 Q10 32 10 24Z" fill="#7b83eb"/><rect x="1" y="9" width="18" height="18" rx="2" fill="#4b53bc"/><path d="M5.500 13.500 H14.500 M10 13.500 V23" stroke="#fff" stroke-width="2.200"/><circle cx="30" cy="28" r="6.500" fill="#fff"/><circle cx="30" cy="28" r="5.200" fill="#6bb700"/><path d="M27.300 28 L29.300 30 L32.800 26" stroke="#fff" stroke-width="1.500" fill="none"/></svg>
<!-- zalo -->
<svg class="abs" style="left:1054px;top:1031px" width="42" height="40" viewBox="0 0 42 40"><path d="M8 2 H30 Q36 2 36 8 V26 Q36 32 30 32 H12 L5 36 V30 Q2 28 2 24 V8 Q2 2 8 2Z" fill="#fff"/><path d="M2 22 Q4 30 12 32 L5 36 V30 Q2 28 2 22Z" fill="#0b6cf0"/><text x="19" y="20" font-family="Liberation Sans,sans-serif" font-weight="bold" font-size="10.500" fill="#0b6cf0" text-anchor="middle">Zalo</text><circle cx="29.500" cy="27.500" r="11.500" fill="#e8101e"/><text x="29.500" y="32" font-family="Liberation Sans,sans-serif" font-weight="bold" font-size="12.500" fill="#fff" text-anchor="middle">5+</text></svg>
<!-- zoom active -->
<div class="abs" style="left:1112px;top:1020px;width:66px;height:56px;background:#4b565b"></div>
<div class="abs" style="left:1178px;top:1020px;width:7px;height:56px;background:#3b474c"></div>
<svg class="abs" style="left:1130px;top:1032px" width="35" height="35" viewBox="0 0 35 35"><rect x=".5" y=".5" width="34" height="34" rx="9" fill="#4a8cff"/><rect x="6.500" y="11.500" width="15" height="12" rx="3" fill="#fff"/><path d="M22.800 15.500 L28 11.800 V23.200 L22.800 19.500Z" fill="#fff"/></svg>
<!-- chrome -->
<svg class="abs" style="left:1205px;top:1032px" width="36" height="36" viewBox="0 0 36 36"><circle cx="18" cy="18" r="17" fill="#db4437"/><path d="M18 18 L3.300 9.500 A17 17 0 0 0 12 34 Z" fill="#0f9d58"/><path d="M18 18 L12 34 A17 17 0 0 0 34.800 15 L18 10Z" fill="#ffcd40"/><path d="M3.300 9.500 A17 17 0 0 1 34.800 15 L18 12Z" fill="#db4437"/><circle cx="18" cy="18" r="8" fill="#fff"/><circle cx="18" cy="18" r="6.300" fill="#4285f4"/></svg>
<!-- running indicators -->
<div class="abs" style="left:968px;top:1076px;width:61px;height:4px;background:#76b9ed"></div>
<div class="abs" style="left:1043px;top:1076px;width:49px;height:4px;background:#76b9ed"></div>
<div class="abs" style="left:1093px;top:1076px;width:10px;height:4px;background:#6aa6d6"></div>
<div class="abs" style="left:1112px;top:1076px;width:66px;height:4px;background:#76b9ed"></div>
<div class="abs" style="left:1193px;top:1076px;width:60px;height:4px;background:#76b9ed"></div>
<!-- tray -->
<svg class="abs" style="left:1356px;top:1035px" width="36" height="32" viewBox="0 0 36 32"><defs><linearGradient id="cl1" x1="0" y1="0" x2="0" y2="1"><stop offset="0" stop-color="#fdfefe"/><stop offset="1" stop-color="#b9d3ee"/></linearGradient></defs><path d="M8 21 Q1 21 1 15 Q1 9 7.500 9 Q9 2 17 2 Q24 2 26 7.500 Q34 7 34.500 14.500 Q34.500 21 28 21Z" fill="url(#cl1)"/><g fill="#3f9ae8"><path d="M11 23 Q14 27.500 11 29 Q8 27.500 11 23Z"/><path d="M18 18 Q20.500 22 18 23.500 Q15.500 22 18 18Z"/><path d="M25 21.500 Q27.500 25.500 25 27 Q22.500 25.500 25 21.500Z"/></g></svg>
<div class="t" style="left:1404px;top:1040px;font-size:21.500px;color:#fff;letter-spacing:-1px">26°C</div>
<svg class="abs" style="left:1474px;top:1044px" width="20" height="12" viewBox="0 0 20 12"><path d="M1.500 10.500 L10 2 L18.500 10.500" stroke="#fff" stroke-width="1.500" fill="none"/></svg>
<svg class="abs" style="left:1507px;top:1041px" width="27" height="18" viewBox="0 0 27 18"><path d="M6 17 Q1 17 1 12.500 Q1 8.500 5 8 Q6.500 2 12.500 2 Q17 2 19 6 Q25.500 6 26 11.500 Q26 17 21 17Z" fill="#1a86e0"/><path d="M9 17 Q14 9 19 6 Q25.500 6 26 11.500 Q26 17 21 17Z" fill="#3aa6f2"/></svg>
<svg class="abs" style="left:1547px;top:1037px" width="18" height="26" viewBox="0 0 18 26"><rect x="5" y="1" width="8" height="15" rx="4" fill="#fff"/><path d="M2 12 Q2 19 9 19 Q16 19 16 12" stroke="#fff" stroke-width="1.300" fill="none"/><path d="M9 19 V24 M5 24.500 H13" stroke="#fff" stroke-width="1.300"/></svg>
<svg class="abs" style="left:1580px;top:1044px" width="26" height="15" viewBox="0 0 26 15"><rect x="1" y="1.500" width="21" height="12" stroke="#fff" stroke-width="1.400" fill="none"/><rect x="3.500" y="4" width="8" height="7" fill="#fff"/><rect x="22.500" y="5" width="2" height="5" fill="#fff"/></svg>
<svg class="abs" style="left:1618px;top:1040px" width="22" height="22" viewBox="0 0 22 22"><g stroke="#fff" stroke-width="1.400" fill="none"><path d="M2 20 A18 18 0 0 1 20 2" opacity=".55"/><path d="M7 20 A13 13 0 0 1 20 7" opacity=".75"/><path d="M12 20 A8 8 0 0 1 20 12"/></g><circle cx="18.500" cy="18.500" r="1.700" fill="#fff"/></svg>
<svg class="abs" style="left:1652px;top:1041px" width="24" height="19" viewBox="0 0 24 19"><path d="M1 6.500 H4.500 L9.500 1.500 V17.500 L4.500 12.500 H1Z" stroke="#fff" stroke-width="1.300" fill="none" stroke-linejoin="round"/><path d="M14 6 L21 13 M21 6 L14 13" stroke="#fff" stroke-width="1.300"/></svg>
<div class="t" style="left:1692px;top:1041.500px;font-size:17.5px;color:#fff;letter-spacing:-1.4px">ENG</div>
<div class="t" style="left:1754px;top:1027.500px;font-size:18px;color:#fff;letter-spacing:0px">8:40 AM</div>
<div class="t" style="left:1751.500px;top:1055.500px;font-size:18px;color:#fff;letter-spacing:.25px">7/8/2021</div>
<svg class="abs" style="left:1857px;top:1037px" width="40" height="40" viewBox="0 0 40 40"><path d="M1 1.500 H25 V19.500 H13 L8 24.500 V19.500 H1Z" fill="#fff"/><path d="M5 6.500 H21 M5 10.500 H21 M5 14.500 H16" stroke="#25383f" stroke-width="1.300"/><circle cx="24.500" cy="24.500" r="11.500" fill="#25383f" stroke="#8a979c" stroke-width="1.200"/><text x="24.500" y="31" font-family="Liberation Sans,sans-serif" font-size="18" fill="#fff" text-anchor="middle">2</text></svg>
<div class="abs" style="left:1912px;top:1020px;width:1px;height:60px;background:#8a979c"></div>
</body>
</html>
